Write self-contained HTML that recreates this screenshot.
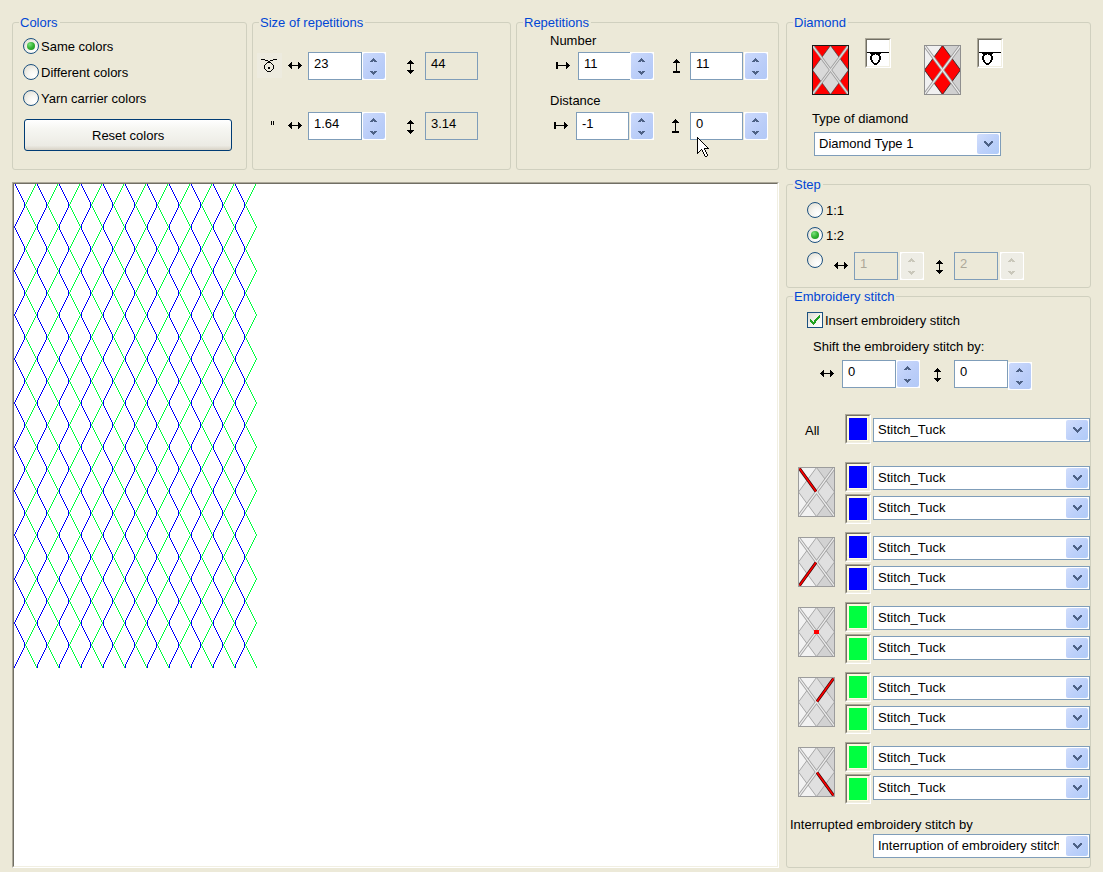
<!DOCTYPE html><html><head><meta charset="utf-8"><style>
*{box-sizing:content-box}
html,body{margin:0;padding:0;width:1103px;height:872px;overflow:hidden;background:#ECE9D8;font-family:"Liberation Sans", sans-serif;font-size:13px}
.t{position:absolute;white-space:nowrap;line-height:15px;font-size:13px}
.grp{position:absolute;border:1px solid #D0D0BF;border-radius:3px}
.gt{position:absolute;background:#ECE9D8;color:#0046D5;padding:0 2px 0 1px;line-height:15px;white-space:nowrap}
.rad{position:absolute;width:14px;height:14px;border:1px solid #1C5180;border-radius:50%;background:radial-gradient(circle at 70% 75%,#FFFFFF 0%,#F6F5F0 40%,#DCD9CC 100%)}
.rad .dot{position:absolute;left:3px;top:3px;width:8px;height:8px;border-radius:50%;background:radial-gradient(circle at 35% 30%,#7BE07B 0%,#32B232 50%,#1D8B1D 100%)}
.tb{position:absolute;border:1px solid #7F9DB9;background:#fff;overflow:hidden}
.tb.ro{background:#ECE9D8}
.tb span{position:absolute;left:5px;top:3px;line-height:15px;white-space:nowrap}
.sp{position:absolute;background:#fff}
.sp .spi{position:absolute;left:1px;top:1px;border-radius:2px;background:linear-gradient(135deg,#CCDAFC 0%,#BACDF8 60%,#B2C9F7 100%)}
.sp.dis{background:#fff}
.sp.dis .spi{background:#EEEDE5}
.cb{position:absolute;border:1px solid #7F9DB9;background:#fff;overflow:hidden}
.cbt{position:absolute;left:4px;top:3px;line-height:15px;white-space:nowrap;overflow:hidden}
.cbb{position:absolute;right:1px;top:1px;width:22px;height:20px;border-radius:2px;background:linear-gradient(135deg,#D2DEFC 0%,#BCD0FA 55%,#B0CBF8 100%)}
.snk{position:absolute;border-style:solid;border-width:1px;border-color:#ACA899 #FFFFFF #FFFFFF #ACA899}
.snk2{position:absolute;left:0;top:0;border-style:solid;border-width:1px;border-color:#716F64 #F1EFE2 #F1EFE2 #716F64}
.btn{position:absolute;border:1px solid #003C74;border-radius:3px;background:linear-gradient(180deg,#FFFFFF 0%,#F6F6F2 30%,#ECEBE4 85%,#D8D2C6 100%)}
</style></head><body>

<div class="grp" style="left:12px;top:22px;width:233px;height:146px"></div><div class="gt" style="left:19px;top:15px">Colors</div>
<div class="grp" style="left:252px;top:22px;width:257px;height:146px"></div><div class="gt" style="left:259px;top:15px">Size of repetitions</div>
<div class="grp" style="left:516px;top:22px;width:261px;height:146px"></div><div class="gt" style="left:523px;top:15px">Repetitions</div>
<div class="grp" style="left:786px;top:22px;width:303px;height:146px"></div><div class="gt" style="left:793px;top:15px">Diamond</div>
<div class="grp" style="left:786px;top:184px;width:303px;height:102px"></div><div class="gt" style="left:793px;top:177px">Step</div>
<div class="grp" style="left:786px;top:296px;width:303px;height:570px"></div><div class="gt" style="left:793px;top:289px">Embroidery stitch</div>
<div class="rad" style="left:23px;top:38px"><div class="dot"></div></div>
<div class="t" style="left:41px;top:39px;color:#000;">Same colors</div>
<div class="rad" style="left:23px;top:64px"></div>
<div class="t" style="left:41px;top:65px;color:#000;">Different colors</div>
<div class="rad" style="left:23px;top:90px"></div>
<div class="t" style="left:41px;top:91px;color:#000;">Yarn carrier colors</div>
<div class="btn" style="left:24px;top:119px;width:206px;height:30px"></div>
<div class="t" style="left:92px;top:128px;color:#000;">Reset colors</div>
<div style="position:absolute;left:257px;top:53px;width:25px;height:25px;background:#EDEBDF"></div>
<svg style="position:absolute;left:261px;top:59px" width="16" height="13" shape-rendering="crispEdges"><path fill="#000" d="M0 0h4v1h-4zM12 0h4v1h-4zM4 1h3v1h-3zM9 1h3v1h-3zM7 2h2v1h-2zM6 3h4v1h-4zM5 4h1v1h-1zM10 4h1v1h-1zM4 5h1v1h-1zM11 5h1v1h-1zM3 6h1v1h-1zM12 6h1v1h-1zM3 7h1v1h-1zM12 7h1v1h-1zM3 8h1v1h-1zM7 8h2v1h-2zM12 8h1v1h-1zM3 9h1v1h-1zM7 9h2v1h-2zM12 9h1v1h-1zM4 10h1v1h-1zM11 10h1v1h-1zM5 11h1v1h-1zM10 11h1v1h-1zM6 12h4v1h-4z"/></svg>
<svg style="position:absolute;left:288px;top:62px" width="14" height="7" shape-rendering="crispEdges"><path fill="#000" d="M3 0h1v1h-1zM10 0h1v1h-1zM2 1h2v1h-2zM10 1h2v1h-2zM1 2h3v1h-3zM10 2h3v1h-3zM0 3h14v1h-14zM1 4h3v1h-3zM10 4h3v1h-3zM2 5h2v1h-2zM10 5h2v1h-2zM3 6h1v1h-1zM10 6h1v1h-1z"/></svg>
<div class="tb" style="left:308px;top:52px;width:52px;height:26px;"><span style="color:#000">23</span></div>
<div class="sp" style="left:362px;top:52px;width:24px;height:28px"><div class="spi" style="width:22px;height:26px"><svg style="position:absolute;left:7px;top:5px" width="7" height="4" shape-rendering="crispEdges"><path fill="#4D6185" d="M3 0h1v1h-1zM2 1h3v1h-3zM1 2h5v1h-5zM0 3h3v1h-3zM4 3h3v1h-3z"/></svg><svg style="position:absolute;left:7px;top:18px" width="7" height="4" shape-rendering="crispEdges"><path fill="#4D6185" d="M0 0h3v1h-3zM4 0h3v1h-3zM1 1h5v1h-5zM2 2h3v1h-3zM3 3h1v1h-1z"/></svg></div></div>
<svg style="position:absolute;left:407px;top:60px" width="7" height="14" shape-rendering="crispEdges"><path fill="#000" d="M3 0h1v1h-1zM2 1h3v1h-3zM1 2h5v1h-5zM0 3h7v1h-7zM3 4h1v1h-1zM3 5h1v1h-1zM3 6h1v1h-1zM3 7h1v1h-1zM3 8h1v1h-1zM3 9h1v1h-1zM0 10h7v1h-7zM1 11h5v1h-5zM2 12h3v1h-3zM3 13h1v1h-1z"/></svg>
<div class="tb ro" style="left:425px;top:52px;width:51px;height:26px;"><span style="color:#000">44</span></div>
<svg style="position:absolute;left:271px;top:121px" width="3" height="4" shape-rendering="crispEdges"><path fill="#000" d="M0 0h1v1h-1zM2 0h1v1h-1zM0 1h1v1h-1zM2 1h1v1h-1zM0 2h1v1h-1zM2 2h1v1h-1zM0 3h1v1h-1zM2 3h1v1h-1z"/></svg>
<svg style="position:absolute;left:288px;top:122px" width="14" height="7" shape-rendering="crispEdges"><path fill="#000" d="M3 0h1v1h-1zM10 0h1v1h-1zM2 1h2v1h-2zM10 1h2v1h-2zM1 2h3v1h-3zM10 2h3v1h-3zM0 3h14v1h-14zM1 4h3v1h-3zM10 4h3v1h-3zM2 5h2v1h-2zM10 5h2v1h-2zM3 6h1v1h-1zM10 6h1v1h-1z"/></svg>
<div class="tb" style="left:308px;top:112px;width:52px;height:26px;"><span style="color:#000">1.64</span></div>
<div class="sp" style="left:362px;top:112px;width:24px;height:28px"><div class="spi" style="width:22px;height:26px"><svg style="position:absolute;left:7px;top:5px" width="7" height="4" shape-rendering="crispEdges"><path fill="#4D6185" d="M3 0h1v1h-1zM2 1h3v1h-3zM1 2h5v1h-5zM0 3h3v1h-3zM4 3h3v1h-3z"/></svg><svg style="position:absolute;left:7px;top:18px" width="7" height="4" shape-rendering="crispEdges"><path fill="#4D6185" d="M0 0h3v1h-3zM4 0h3v1h-3zM1 1h5v1h-5zM2 2h3v1h-3zM3 3h1v1h-1z"/></svg></div></div>
<svg style="position:absolute;left:407px;top:120px" width="7" height="14" shape-rendering="crispEdges"><path fill="#000" d="M3 0h1v1h-1zM2 1h3v1h-3zM1 2h5v1h-5zM0 3h7v1h-7zM3 4h1v1h-1zM3 5h1v1h-1zM3 6h1v1h-1zM3 7h1v1h-1zM3 8h1v1h-1zM3 9h1v1h-1zM0 10h7v1h-7zM1 11h5v1h-5zM2 12h3v1h-3zM3 13h1v1h-1z"/></svg>
<div class="tb ro" style="left:425px;top:112px;width:51px;height:26px;"><span style="color:#000">3.14</span></div>
<div class="t" style="left:550px;top:33px;color:#000;">Number</div>
<svg style="position:absolute;left:556px;top:62px" width="14" height="7" shape-rendering="crispEdges"><path fill="#000" d="M0 0h2v1h-2zM10 0h1v1h-1zM0 1h2v1h-2zM10 1h2v1h-2zM0 2h2v1h-2zM10 2h3v1h-3zM0 3h14v1h-14zM0 4h2v1h-2zM10 4h3v1h-3zM0 5h2v1h-2zM10 5h2v1h-2zM0 6h2v1h-2zM10 6h1v1h-1z"/></svg>
<div class="tb" style="left:578px;top:52px;width:50px;height:26px;border-right:none;width:51px;"><span style="color:#000">11</span></div>
<div class="sp" style="left:630px;top:52px;width:24px;height:28px"><div class="spi" style="width:22px;height:26px"><svg style="position:absolute;left:7px;top:5px" width="7" height="4" shape-rendering="crispEdges"><path fill="#4D6185" d="M3 0h1v1h-1zM2 1h3v1h-3zM1 2h5v1h-5zM0 3h3v1h-3zM4 3h3v1h-3z"/></svg><svg style="position:absolute;left:7px;top:18px" width="7" height="4" shape-rendering="crispEdges"><path fill="#4D6185" d="M0 0h3v1h-3zM4 0h3v1h-3zM1 1h5v1h-5zM2 2h3v1h-3zM3 3h1v1h-1z"/></svg></div></div>
<svg style="position:absolute;left:673px;top:59px" width="7" height="14" shape-rendering="crispEdges"><path fill="#000" d="M3 0h1v1h-1zM2 1h3v1h-3zM1 2h5v1h-5zM0 3h7v1h-7zM3 4h1v1h-1zM3 5h1v1h-1zM3 6h1v1h-1zM3 7h1v1h-1zM3 8h1v1h-1zM3 9h1v1h-1zM3 10h1v1h-1zM3 11h1v1h-1zM0 12h7v1h-7zM0 13h7v1h-7z"/></svg>
<div class="tb" style="left:690px;top:52px;width:51px;height:26px;"><span style="color:#000">11</span></div>
<div class="sp" style="left:744px;top:52px;width:24px;height:28px"><div class="spi" style="width:22px;height:26px"><svg style="position:absolute;left:7px;top:5px" width="7" height="4" shape-rendering="crispEdges"><path fill="#4D6185" d="M3 0h1v1h-1zM2 1h3v1h-3zM1 2h5v1h-5zM0 3h3v1h-3zM4 3h3v1h-3z"/></svg><svg style="position:absolute;left:7px;top:18px" width="7" height="4" shape-rendering="crispEdges"><path fill="#4D6185" d="M0 0h3v1h-3zM4 0h3v1h-3zM1 1h5v1h-5zM2 2h3v1h-3zM3 3h1v1h-1z"/></svg></div></div>
<div class="t" style="left:550px;top:93px;color:#000;">Distance</div>
<svg style="position:absolute;left:554px;top:122px" width="14" height="7" shape-rendering="crispEdges"><path fill="#000" d="M0 0h2v1h-2zM10 0h1v1h-1zM0 1h2v1h-2zM10 1h2v1h-2zM0 2h2v1h-2zM10 2h3v1h-3zM0 3h14v1h-14zM0 4h2v1h-2zM10 4h3v1h-3zM0 5h2v1h-2zM10 5h2v1h-2zM0 6h2v1h-2zM10 6h1v1h-1z"/></svg>
<div class="tb" style="left:576px;top:112px;width:51px;height:26px;"><span style="color:#000">-1</span></div>
<div class="sp" style="left:630px;top:112px;width:24px;height:28px"><div class="spi" style="width:22px;height:26px"><svg style="position:absolute;left:7px;top:5px" width="7" height="4" shape-rendering="crispEdges"><path fill="#4D6185" d="M3 0h1v1h-1zM2 1h3v1h-3zM1 2h5v1h-5zM0 3h3v1h-3zM4 3h3v1h-3z"/></svg><svg style="position:absolute;left:7px;top:18px" width="7" height="4" shape-rendering="crispEdges"><path fill="#4D6185" d="M0 0h3v1h-3zM4 0h3v1h-3zM1 1h5v1h-5zM2 2h3v1h-3zM3 3h1v1h-1z"/></svg></div></div>
<svg style="position:absolute;left:672px;top:119px" width="7" height="14" shape-rendering="crispEdges"><path fill="#000" d="M3 0h1v1h-1zM2 1h3v1h-3zM1 2h5v1h-5zM0 3h7v1h-7zM3 4h1v1h-1zM3 5h1v1h-1zM3 6h1v1h-1zM3 7h1v1h-1zM3 8h1v1h-1zM3 9h1v1h-1zM3 10h1v1h-1zM3 11h1v1h-1zM0 12h7v1h-7zM0 13h7v1h-7z"/></svg>
<div class="tb" style="left:690px;top:112px;width:51px;height:26px;"><span style="color:#000">0</span></div>
<div class="sp" style="left:744px;top:112px;width:24px;height:28px"><div class="spi" style="width:22px;height:26px"><svg style="position:absolute;left:7px;top:5px" width="7" height="4" shape-rendering="crispEdges"><path fill="#4D6185" d="M3 0h1v1h-1zM2 1h3v1h-3zM1 2h5v1h-5zM0 3h3v1h-3zM4 3h3v1h-3z"/></svg><svg style="position:absolute;left:7px;top:18px" width="7" height="4" shape-rendering="crispEdges"><path fill="#4D6185" d="M0 0h3v1h-3zM4 0h3v1h-3zM1 1h5v1h-5zM2 2h3v1h-3zM3 3h1v1h-1z"/></svg></div></div>
<div style="position:absolute;left:12px;top:182px;width:765px;height:684px;border-style:solid;border-width:1px;border-color:#ACA899 #FFFFFF #FFFFFF #ACA899;background:#fff"><div style="position:absolute;left:0;top:0;width:763px;height:682px;border-style:solid;border-width:1px;border-color:#716F64 #F1EFE2 #F1EFE2 #716F64"></div></div>
<svg style="position:absolute;left:14px;top:184px" width="250" height="490" shape-rendering="crispEdges"><path fill="#0000FF" d="M1 0h1v2h-1zM2 2h1v2h-1zM3 4h1v2h-1zM4 6h1v2h-1zM5 8h1v2h-1zM6 10h1v2h-1zM7 12h1v2h-1zM8 14h1v2h-1zM9 16h1v2h-1zM10 18h1v6h-1zM9 24h1v2h-1zM8 26h1v2h-1zM7 28h1v2h-1zM6 30h1v2h-1zM5 32h1v2h-1zM4 34h1v2h-1zM3 36h1v2h-1zM2 38h1v2h-1zM1 40h1v2h-1zM0 42h1v2h-1zM23 0h1v2h-1zM24 2h1v2h-1zM25 4h1v2h-1zM26 6h1v2h-1zM27 8h1v2h-1zM28 10h1v2h-1zM29 12h1v2h-1zM30 14h1v2h-1zM31 16h1v2h-1zM32 18h1v6h-1zM31 24h1v2h-1zM30 26h1v2h-1zM29 28h1v2h-1zM28 30h1v2h-1zM27 32h1v2h-1zM26 34h1v2h-1zM25 36h1v2h-1zM24 38h1v2h-1zM23 40h1v2h-1zM22 42h1v2h-1zM23 42h1v2h-1zM45 0h1v2h-1zM46 2h1v2h-1zM47 4h1v2h-1zM48 6h1v2h-1zM49 8h1v2h-1zM50 10h1v2h-1zM51 12h1v2h-1zM52 14h1v2h-1zM53 16h1v2h-1zM54 18h1v6h-1zM53 24h1v2h-1zM52 26h1v2h-1zM51 28h1v2h-1zM50 30h1v2h-1zM49 32h1v2h-1zM48 34h1v2h-1zM47 36h1v2h-1zM46 38h1v2h-1zM45 40h1v2h-1zM44 42h1v2h-1zM45 42h1v2h-1zM67 0h1v2h-1zM68 2h1v2h-1zM69 4h1v2h-1zM70 6h1v2h-1zM71 8h1v2h-1zM72 10h1v2h-1zM73 12h1v2h-1zM74 14h1v2h-1zM75 16h1v2h-1zM76 18h1v6h-1zM75 24h1v2h-1zM74 26h1v2h-1zM73 28h1v2h-1zM72 30h1v2h-1zM71 32h1v2h-1zM70 34h1v2h-1zM69 36h1v2h-1zM68 38h1v2h-1zM67 40h1v2h-1zM66 42h1v2h-1zM67 42h1v2h-1zM89 0h1v2h-1zM90 2h1v2h-1zM91 4h1v2h-1zM92 6h1v2h-1zM93 8h1v2h-1zM94 10h1v2h-1zM95 12h1v2h-1zM96 14h1v2h-1zM97 16h1v2h-1zM98 18h1v6h-1zM97 24h1v2h-1zM96 26h1v2h-1zM95 28h1v2h-1zM94 30h1v2h-1zM93 32h1v2h-1zM92 34h1v2h-1zM91 36h1v2h-1zM90 38h1v2h-1zM89 40h1v2h-1zM88 42h1v2h-1zM89 42h1v2h-1zM111 0h1v2h-1zM112 2h1v2h-1zM113 4h1v2h-1zM114 6h1v2h-1zM115 8h1v2h-1zM116 10h1v2h-1zM117 12h1v2h-1zM118 14h1v2h-1zM119 16h1v2h-1zM120 18h1v6h-1zM119 24h1v2h-1zM118 26h1v2h-1zM117 28h1v2h-1zM116 30h1v2h-1zM115 32h1v2h-1zM114 34h1v2h-1zM113 36h1v2h-1zM112 38h1v2h-1zM111 40h1v2h-1zM110 42h1v2h-1zM111 42h1v2h-1zM133 0h1v2h-1zM134 2h1v2h-1zM135 4h1v2h-1zM136 6h1v2h-1zM137 8h1v2h-1zM138 10h1v2h-1zM139 12h1v2h-1zM140 14h1v2h-1zM141 16h1v2h-1zM142 18h1v6h-1zM141 24h1v2h-1zM140 26h1v2h-1zM139 28h1v2h-1zM138 30h1v2h-1zM137 32h1v2h-1zM136 34h1v2h-1zM135 36h1v2h-1zM134 38h1v2h-1zM133 40h1v2h-1zM132 42h1v2h-1zM133 42h1v2h-1zM155 0h1v2h-1zM156 2h1v2h-1zM157 4h1v2h-1zM158 6h1v2h-1zM159 8h1v2h-1zM160 10h1v2h-1zM161 12h1v2h-1zM162 14h1v2h-1zM163 16h1v2h-1zM164 18h1v6h-1zM163 24h1v2h-1zM162 26h1v2h-1zM161 28h1v2h-1zM160 30h1v2h-1zM159 32h1v2h-1zM158 34h1v2h-1zM157 36h1v2h-1zM156 38h1v2h-1zM155 40h1v2h-1zM154 42h1v2h-1zM155 42h1v2h-1zM177 0h1v2h-1zM178 2h1v2h-1zM179 4h1v2h-1zM180 6h1v2h-1zM181 8h1v2h-1zM182 10h1v2h-1zM183 12h1v2h-1zM184 14h1v2h-1zM185 16h1v2h-1zM186 18h1v6h-1zM185 24h1v2h-1zM184 26h1v2h-1zM183 28h1v2h-1zM182 30h1v2h-1zM181 32h1v2h-1zM180 34h1v2h-1zM179 36h1v2h-1zM178 38h1v2h-1zM177 40h1v2h-1zM176 42h1v2h-1zM177 42h1v2h-1zM199 0h1v2h-1zM200 2h1v2h-1zM201 4h1v2h-1zM202 6h1v2h-1zM203 8h1v2h-1zM204 10h1v2h-1zM205 12h1v2h-1zM206 14h1v2h-1zM207 16h1v2h-1zM208 18h1v6h-1zM207 24h1v2h-1zM206 26h1v2h-1zM205 28h1v2h-1zM204 30h1v2h-1zM203 32h1v2h-1zM202 34h1v2h-1zM201 36h1v2h-1zM200 38h1v2h-1zM199 40h1v2h-1zM198 42h1v2h-1zM199 42h1v2h-1zM221 0h1v2h-1zM222 2h1v2h-1zM223 4h1v2h-1zM224 6h1v2h-1zM225 8h1v2h-1zM226 10h1v2h-1zM227 12h1v2h-1zM228 14h1v2h-1zM229 16h1v2h-1zM230 18h1v6h-1zM229 24h1v2h-1zM228 26h1v2h-1zM227 28h1v2h-1zM226 30h1v2h-1zM225 32h1v2h-1zM224 34h1v2h-1zM223 36h1v2h-1zM222 38h1v2h-1zM221 40h1v2h-1zM220 42h1v2h-1zM221 42h1v2h-1zM1 44h1v2h-1zM2 46h1v2h-1zM3 48h1v2h-1zM4 50h1v2h-1zM5 52h1v2h-1zM6 54h1v2h-1zM7 56h1v2h-1zM8 58h1v2h-1zM9 60h1v2h-1zM10 62h1v6h-1zM9 68h1v2h-1zM8 70h1v2h-1zM7 72h1v2h-1zM6 74h1v2h-1zM5 76h1v2h-1zM4 78h1v2h-1zM3 80h1v2h-1zM2 82h1v2h-1zM1 84h1v2h-1zM0 86h1v2h-1zM23 44h1v2h-1zM24 46h1v2h-1zM25 48h1v2h-1zM26 50h1v2h-1zM27 52h1v2h-1zM28 54h1v2h-1zM29 56h1v2h-1zM30 58h1v2h-1zM31 60h1v2h-1zM32 62h1v6h-1zM31 68h1v2h-1zM30 70h1v2h-1zM29 72h1v2h-1zM28 74h1v2h-1zM27 76h1v2h-1zM26 78h1v2h-1zM25 80h1v2h-1zM24 82h1v2h-1zM23 84h1v2h-1zM22 86h1v2h-1zM23 86h1v2h-1zM45 44h1v2h-1zM46 46h1v2h-1zM47 48h1v2h-1zM48 50h1v2h-1zM49 52h1v2h-1zM50 54h1v2h-1zM51 56h1v2h-1zM52 58h1v2h-1zM53 60h1v2h-1zM54 62h1v6h-1zM53 68h1v2h-1zM52 70h1v2h-1zM51 72h1v2h-1zM50 74h1v2h-1zM49 76h1v2h-1zM48 78h1v2h-1zM47 80h1v2h-1zM46 82h1v2h-1zM45 84h1v2h-1zM44 86h1v2h-1zM45 86h1v2h-1zM67 44h1v2h-1zM68 46h1v2h-1zM69 48h1v2h-1zM70 50h1v2h-1zM71 52h1v2h-1zM72 54h1v2h-1zM73 56h1v2h-1zM74 58h1v2h-1zM75 60h1v2h-1zM76 62h1v6h-1zM75 68h1v2h-1zM74 70h1v2h-1zM73 72h1v2h-1zM72 74h1v2h-1zM71 76h1v2h-1zM70 78h1v2h-1zM69 80h1v2h-1zM68 82h1v2h-1zM67 84h1v2h-1zM66 86h1v2h-1zM67 86h1v2h-1zM89 44h1v2h-1zM90 46h1v2h-1zM91 48h1v2h-1zM92 50h1v2h-1zM93 52h1v2h-1zM94 54h1v2h-1zM95 56h1v2h-1zM96 58h1v2h-1zM97 60h1v2h-1zM98 62h1v6h-1zM97 68h1v2h-1zM96 70h1v2h-1zM95 72h1v2h-1zM94 74h1v2h-1zM93 76h1v2h-1zM92 78h1v2h-1zM91 80h1v2h-1zM90 82h1v2h-1zM89 84h1v2h-1zM88 86h1v2h-1zM89 86h1v2h-1zM111 44h1v2h-1zM112 46h1v2h-1zM113 48h1v2h-1zM114 50h1v2h-1zM115 52h1v2h-1zM116 54h1v2h-1zM117 56h1v2h-1zM118 58h1v2h-1zM119 60h1v2h-1zM120 62h1v6h-1zM119 68h1v2h-1zM118 70h1v2h-1zM117 72h1v2h-1zM116 74h1v2h-1zM115 76h1v2h-1zM114 78h1v2h-1zM113 80h1v2h-1zM112 82h1v2h-1zM111 84h1v2h-1zM110 86h1v2h-1zM111 86h1v2h-1zM133 44h1v2h-1zM134 46h1v2h-1zM135 48h1v2h-1zM136 50h1v2h-1zM137 52h1v2h-1zM138 54h1v2h-1zM139 56h1v2h-1zM140 58h1v2h-1zM141 60h1v2h-1zM142 62h1v6h-1zM141 68h1v2h-1zM140 70h1v2h-1zM139 72h1v2h-1zM138 74h1v2h-1zM137 76h1v2h-1zM136 78h1v2h-1zM135 80h1v2h-1zM134 82h1v2h-1zM133 84h1v2h-1zM132 86h1v2h-1zM133 86h1v2h-1zM155 44h1v2h-1zM156 46h1v2h-1zM157 48h1v2h-1zM158 50h1v2h-1zM159 52h1v2h-1zM160 54h1v2h-1zM161 56h1v2h-1zM162 58h1v2h-1zM163 60h1v2h-1zM164 62h1v6h-1zM163 68h1v2h-1zM162 70h1v2h-1zM161 72h1v2h-1zM160 74h1v2h-1zM159 76h1v2h-1zM158 78h1v2h-1zM157 80h1v2h-1zM156 82h1v2h-1zM155 84h1v2h-1zM154 86h1v2h-1zM155 86h1v2h-1zM177 44h1v2h-1zM178 46h1v2h-1zM179 48h1v2h-1zM180 50h1v2h-1zM181 52h1v2h-1zM182 54h1v2h-1zM183 56h1v2h-1zM184 58h1v2h-1zM185 60h1v2h-1zM186 62h1v6h-1zM185 68h1v2h-1zM184 70h1v2h-1zM183 72h1v2h-1zM182 74h1v2h-1zM181 76h1v2h-1zM180 78h1v2h-1zM179 80h1v2h-1zM178 82h1v2h-1zM177 84h1v2h-1zM176 86h1v2h-1zM177 86h1v2h-1zM199 44h1v2h-1zM200 46h1v2h-1zM201 48h1v2h-1zM202 50h1v2h-1zM203 52h1v2h-1zM204 54h1v2h-1zM205 56h1v2h-1zM206 58h1v2h-1zM207 60h1v2h-1zM208 62h1v6h-1zM207 68h1v2h-1zM206 70h1v2h-1zM205 72h1v2h-1zM204 74h1v2h-1zM203 76h1v2h-1zM202 78h1v2h-1zM201 80h1v2h-1zM200 82h1v2h-1zM199 84h1v2h-1zM198 86h1v2h-1zM199 86h1v2h-1zM221 44h1v2h-1zM222 46h1v2h-1zM223 48h1v2h-1zM224 50h1v2h-1zM225 52h1v2h-1zM226 54h1v2h-1zM227 56h1v2h-1zM228 58h1v2h-1zM229 60h1v2h-1zM230 62h1v6h-1zM229 68h1v2h-1zM228 70h1v2h-1zM227 72h1v2h-1zM226 74h1v2h-1zM225 76h1v2h-1zM224 78h1v2h-1zM223 80h1v2h-1zM222 82h1v2h-1zM221 84h1v2h-1zM220 86h1v2h-1zM221 86h1v2h-1zM1 88h1v2h-1zM2 90h1v2h-1zM3 92h1v2h-1zM4 94h1v2h-1zM5 96h1v2h-1zM6 98h1v2h-1zM7 100h1v2h-1zM8 102h1v2h-1zM9 104h1v2h-1zM10 106h1v6h-1zM9 112h1v2h-1zM8 114h1v2h-1zM7 116h1v2h-1zM6 118h1v2h-1zM5 120h1v2h-1zM4 122h1v2h-1zM3 124h1v2h-1zM2 126h1v2h-1zM1 128h1v2h-1zM0 130h1v2h-1zM23 88h1v2h-1zM24 90h1v2h-1zM25 92h1v2h-1zM26 94h1v2h-1zM27 96h1v2h-1zM28 98h1v2h-1zM29 100h1v2h-1zM30 102h1v2h-1zM31 104h1v2h-1zM32 106h1v6h-1zM31 112h1v2h-1zM30 114h1v2h-1zM29 116h1v2h-1zM28 118h1v2h-1zM27 120h1v2h-1zM26 122h1v2h-1zM25 124h1v2h-1zM24 126h1v2h-1zM23 128h1v2h-1zM22 130h1v2h-1zM23 130h1v2h-1zM45 88h1v2h-1zM46 90h1v2h-1zM47 92h1v2h-1zM48 94h1v2h-1zM49 96h1v2h-1zM50 98h1v2h-1zM51 100h1v2h-1zM52 102h1v2h-1zM53 104h1v2h-1zM54 106h1v6h-1zM53 112h1v2h-1zM52 114h1v2h-1zM51 116h1v2h-1zM50 118h1v2h-1zM49 120h1v2h-1zM48 122h1v2h-1zM47 124h1v2h-1zM46 126h1v2h-1zM45 128h1v2h-1zM44 130h1v2h-1zM45 130h1v2h-1zM67 88h1v2h-1zM68 90h1v2h-1zM69 92h1v2h-1zM70 94h1v2h-1zM71 96h1v2h-1zM72 98h1v2h-1zM73 100h1v2h-1zM74 102h1v2h-1zM75 104h1v2h-1zM76 106h1v6h-1zM75 112h1v2h-1zM74 114h1v2h-1zM73 116h1v2h-1zM72 118h1v2h-1zM71 120h1v2h-1zM70 122h1v2h-1zM69 124h1v2h-1zM68 126h1v2h-1zM67 128h1v2h-1zM66 130h1v2h-1zM67 130h1v2h-1zM89 88h1v2h-1zM90 90h1v2h-1zM91 92h1v2h-1zM92 94h1v2h-1zM93 96h1v2h-1zM94 98h1v2h-1zM95 100h1v2h-1zM96 102h1v2h-1zM97 104h1v2h-1zM98 106h1v6h-1zM97 112h1v2h-1zM96 114h1v2h-1zM95 116h1v2h-1zM94 118h1v2h-1zM93 120h1v2h-1zM92 122h1v2h-1zM91 124h1v2h-1zM90 126h1v2h-1zM89 128h1v2h-1zM88 130h1v2h-1zM89 130h1v2h-1zM111 88h1v2h-1zM112 90h1v2h-1zM113 92h1v2h-1zM114 94h1v2h-1zM115 96h1v2h-1zM116 98h1v2h-1zM117 100h1v2h-1zM118 102h1v2h-1zM119 104h1v2h-1zM120 106h1v6h-1zM119 112h1v2h-1zM118 114h1v2h-1zM117 116h1v2h-1zM116 118h1v2h-1zM115 120h1v2h-1zM114 122h1v2h-1zM113 124h1v2h-1zM112 126h1v2h-1zM111 128h1v2h-1zM110 130h1v2h-1zM111 130h1v2h-1zM133 88h1v2h-1zM134 90h1v2h-1zM135 92h1v2h-1zM136 94h1v2h-1zM137 96h1v2h-1zM138 98h1v2h-1zM139 100h1v2h-1zM140 102h1v2h-1zM141 104h1v2h-1zM142 106h1v6h-1zM141 112h1v2h-1zM140 114h1v2h-1zM139 116h1v2h-1zM138 118h1v2h-1zM137 120h1v2h-1zM136 122h1v2h-1zM135 124h1v2h-1zM134 126h1v2h-1zM133 128h1v2h-1zM132 130h1v2h-1zM133 130h1v2h-1zM155 88h1v2h-1zM156 90h1v2h-1zM157 92h1v2h-1zM158 94h1v2h-1zM159 96h1v2h-1zM160 98h1v2h-1zM161 100h1v2h-1zM162 102h1v2h-1zM163 104h1v2h-1zM164 106h1v6h-1zM163 112h1v2h-1zM162 114h1v2h-1zM161 116h1v2h-1zM160 118h1v2h-1zM159 120h1v2h-1zM158 122h1v2h-1zM157 124h1v2h-1zM156 126h1v2h-1zM155 128h1v2h-1zM154 130h1v2h-1zM155 130h1v2h-1zM177 88h1v2h-1zM178 90h1v2h-1zM179 92h1v2h-1zM180 94h1v2h-1zM181 96h1v2h-1zM182 98h1v2h-1zM183 100h1v2h-1zM184 102h1v2h-1zM185 104h1v2h-1zM186 106h1v6h-1zM185 112h1v2h-1zM184 114h1v2h-1zM183 116h1v2h-1zM182 118h1v2h-1zM181 120h1v2h-1zM180 122h1v2h-1zM179 124h1v2h-1zM178 126h1v2h-1zM177 128h1v2h-1zM176 130h1v2h-1zM177 130h1v2h-1zM199 88h1v2h-1zM200 90h1v2h-1zM201 92h1v2h-1zM202 94h1v2h-1zM203 96h1v2h-1zM204 98h1v2h-1zM205 100h1v2h-1zM206 102h1v2h-1zM207 104h1v2h-1zM208 106h1v6h-1zM207 112h1v2h-1zM206 114h1v2h-1zM205 116h1v2h-1zM204 118h1v2h-1zM203 120h1v2h-1zM202 122h1v2h-1zM201 124h1v2h-1zM200 126h1v2h-1zM199 128h1v2h-1zM198 130h1v2h-1zM199 130h1v2h-1zM221 88h1v2h-1zM222 90h1v2h-1zM223 92h1v2h-1zM224 94h1v2h-1zM225 96h1v2h-1zM226 98h1v2h-1zM227 100h1v2h-1zM228 102h1v2h-1zM229 104h1v2h-1zM230 106h1v6h-1zM229 112h1v2h-1zM228 114h1v2h-1zM227 116h1v2h-1zM226 118h1v2h-1zM225 120h1v2h-1zM224 122h1v2h-1zM223 124h1v2h-1zM222 126h1v2h-1zM221 128h1v2h-1zM220 130h1v2h-1zM221 130h1v2h-1zM1 132h1v2h-1zM2 134h1v2h-1zM3 136h1v2h-1zM4 138h1v2h-1zM5 140h1v2h-1zM6 142h1v2h-1zM7 144h1v2h-1zM8 146h1v2h-1zM9 148h1v2h-1zM10 150h1v6h-1zM9 156h1v2h-1zM8 158h1v2h-1zM7 160h1v2h-1zM6 162h1v2h-1zM5 164h1v2h-1zM4 166h1v2h-1zM3 168h1v2h-1zM2 170h1v2h-1zM1 172h1v2h-1zM0 174h1v2h-1zM23 132h1v2h-1zM24 134h1v2h-1zM25 136h1v2h-1zM26 138h1v2h-1zM27 140h1v2h-1zM28 142h1v2h-1zM29 144h1v2h-1zM30 146h1v2h-1zM31 148h1v2h-1zM32 150h1v6h-1zM31 156h1v2h-1zM30 158h1v2h-1zM29 160h1v2h-1zM28 162h1v2h-1zM27 164h1v2h-1zM26 166h1v2h-1zM25 168h1v2h-1zM24 170h1v2h-1zM23 172h1v2h-1zM22 174h1v2h-1zM23 174h1v2h-1zM45 132h1v2h-1zM46 134h1v2h-1zM47 136h1v2h-1zM48 138h1v2h-1zM49 140h1v2h-1zM50 142h1v2h-1zM51 144h1v2h-1zM52 146h1v2h-1zM53 148h1v2h-1zM54 150h1v6h-1zM53 156h1v2h-1zM52 158h1v2h-1zM51 160h1v2h-1zM50 162h1v2h-1zM49 164h1v2h-1zM48 166h1v2h-1zM47 168h1v2h-1zM46 170h1v2h-1zM45 172h1v2h-1zM44 174h1v2h-1zM45 174h1v2h-1zM67 132h1v2h-1zM68 134h1v2h-1zM69 136h1v2h-1zM70 138h1v2h-1zM71 140h1v2h-1zM72 142h1v2h-1zM73 144h1v2h-1zM74 146h1v2h-1zM75 148h1v2h-1zM76 150h1v6h-1zM75 156h1v2h-1zM74 158h1v2h-1zM73 160h1v2h-1zM72 162h1v2h-1zM71 164h1v2h-1zM70 166h1v2h-1zM69 168h1v2h-1zM68 170h1v2h-1zM67 172h1v2h-1zM66 174h1v2h-1zM67 174h1v2h-1zM89 132h1v2h-1zM90 134h1v2h-1zM91 136h1v2h-1zM92 138h1v2h-1zM93 140h1v2h-1zM94 142h1v2h-1zM95 144h1v2h-1zM96 146h1v2h-1zM97 148h1v2h-1zM98 150h1v6h-1zM97 156h1v2h-1zM96 158h1v2h-1zM95 160h1v2h-1zM94 162h1v2h-1zM93 164h1v2h-1zM92 166h1v2h-1zM91 168h1v2h-1zM90 170h1v2h-1zM89 172h1v2h-1zM88 174h1v2h-1zM89 174h1v2h-1zM111 132h1v2h-1zM112 134h1v2h-1zM113 136h1v2h-1zM114 138h1v2h-1zM115 140h1v2h-1zM116 142h1v2h-1zM117 144h1v2h-1zM118 146h1v2h-1zM119 148h1v2h-1zM120 150h1v6h-1zM119 156h1v2h-1zM118 158h1v2h-1zM117 160h1v2h-1zM116 162h1v2h-1zM115 164h1v2h-1zM114 166h1v2h-1zM113 168h1v2h-1zM112 170h1v2h-1zM111 172h1v2h-1zM110 174h1v2h-1zM111 174h1v2h-1zM133 132h1v2h-1zM134 134h1v2h-1zM135 136h1v2h-1zM136 138h1v2h-1zM137 140h1v2h-1zM138 142h1v2h-1zM139 144h1v2h-1zM140 146h1v2h-1zM141 148h1v2h-1zM142 150h1v6h-1zM141 156h1v2h-1zM140 158h1v2h-1zM139 160h1v2h-1zM138 162h1v2h-1zM137 164h1v2h-1zM136 166h1v2h-1zM135 168h1v2h-1zM134 170h1v2h-1zM133 172h1v2h-1zM132 174h1v2h-1zM133 174h1v2h-1zM155 132h1v2h-1zM156 134h1v2h-1zM157 136h1v2h-1zM158 138h1v2h-1zM159 140h1v2h-1zM160 142h1v2h-1zM161 144h1v2h-1zM162 146h1v2h-1zM163 148h1v2h-1zM164 150h1v6h-1zM163 156h1v2h-1zM162 158h1v2h-1zM161 160h1v2h-1zM160 162h1v2h-1zM159 164h1v2h-1zM158 166h1v2h-1zM157 168h1v2h-1zM156 170h1v2h-1zM155 172h1v2h-1zM154 174h1v2h-1zM155 174h1v2h-1zM177 132h1v2h-1zM178 134h1v2h-1zM179 136h1v2h-1zM180 138h1v2h-1zM181 140h1v2h-1zM182 142h1v2h-1zM183 144h1v2h-1zM184 146h1v2h-1zM185 148h1v2h-1zM186 150h1v6h-1zM185 156h1v2h-1zM184 158h1v2h-1zM183 160h1v2h-1zM182 162h1v2h-1zM181 164h1v2h-1zM180 166h1v2h-1zM179 168h1v2h-1zM178 170h1v2h-1zM177 172h1v2h-1zM176 174h1v2h-1zM177 174h1v2h-1zM199 132h1v2h-1zM200 134h1v2h-1zM201 136h1v2h-1zM202 138h1v2h-1zM203 140h1v2h-1zM204 142h1v2h-1zM205 144h1v2h-1zM206 146h1v2h-1zM207 148h1v2h-1zM208 150h1v6h-1zM207 156h1v2h-1zM206 158h1v2h-1zM205 160h1v2h-1zM204 162h1v2h-1zM203 164h1v2h-1zM202 166h1v2h-1zM201 168h1v2h-1zM200 170h1v2h-1zM199 172h1v2h-1zM198 174h1v2h-1zM199 174h1v2h-1zM221 132h1v2h-1zM222 134h1v2h-1zM223 136h1v2h-1zM224 138h1v2h-1zM225 140h1v2h-1zM226 142h1v2h-1zM227 144h1v2h-1zM228 146h1v2h-1zM229 148h1v2h-1zM230 150h1v6h-1zM229 156h1v2h-1zM228 158h1v2h-1zM227 160h1v2h-1zM226 162h1v2h-1zM225 164h1v2h-1zM224 166h1v2h-1zM223 168h1v2h-1zM222 170h1v2h-1zM221 172h1v2h-1zM220 174h1v2h-1zM221 174h1v2h-1zM1 176h1v2h-1zM2 178h1v2h-1zM3 180h1v2h-1zM4 182h1v2h-1zM5 184h1v2h-1zM6 186h1v2h-1zM7 188h1v2h-1zM8 190h1v2h-1zM9 192h1v2h-1zM10 194h1v6h-1zM9 200h1v2h-1zM8 202h1v2h-1zM7 204h1v2h-1zM6 206h1v2h-1zM5 208h1v2h-1zM4 210h1v2h-1zM3 212h1v2h-1zM2 214h1v2h-1zM1 216h1v2h-1zM0 218h1v2h-1zM23 176h1v2h-1zM24 178h1v2h-1zM25 180h1v2h-1zM26 182h1v2h-1zM27 184h1v2h-1zM28 186h1v2h-1zM29 188h1v2h-1zM30 190h1v2h-1zM31 192h1v2h-1zM32 194h1v6h-1zM31 200h1v2h-1zM30 202h1v2h-1zM29 204h1v2h-1zM28 206h1v2h-1zM27 208h1v2h-1zM26 210h1v2h-1zM25 212h1v2h-1zM24 214h1v2h-1zM23 216h1v2h-1zM22 218h1v2h-1zM23 218h1v2h-1zM45 176h1v2h-1zM46 178h1v2h-1zM47 180h1v2h-1zM48 182h1v2h-1zM49 184h1v2h-1zM50 186h1v2h-1zM51 188h1v2h-1zM52 190h1v2h-1zM53 192h1v2h-1zM54 194h1v6h-1zM53 200h1v2h-1zM52 202h1v2h-1zM51 204h1v2h-1zM50 206h1v2h-1zM49 208h1v2h-1zM48 210h1v2h-1zM47 212h1v2h-1zM46 214h1v2h-1zM45 216h1v2h-1zM44 218h1v2h-1zM45 218h1v2h-1zM67 176h1v2h-1zM68 178h1v2h-1zM69 180h1v2h-1zM70 182h1v2h-1zM71 184h1v2h-1zM72 186h1v2h-1zM73 188h1v2h-1zM74 190h1v2h-1zM75 192h1v2h-1zM76 194h1v6h-1zM75 200h1v2h-1zM74 202h1v2h-1zM73 204h1v2h-1zM72 206h1v2h-1zM71 208h1v2h-1zM70 210h1v2h-1zM69 212h1v2h-1zM68 214h1v2h-1zM67 216h1v2h-1zM66 218h1v2h-1zM67 218h1v2h-1zM89 176h1v2h-1zM90 178h1v2h-1zM91 180h1v2h-1zM92 182h1v2h-1zM93 184h1v2h-1zM94 186h1v2h-1zM95 188h1v2h-1zM96 190h1v2h-1zM97 192h1v2h-1zM98 194h1v6h-1zM97 200h1v2h-1zM96 202h1v2h-1zM95 204h1v2h-1zM94 206h1v2h-1zM93 208h1v2h-1zM92 210h1v2h-1zM91 212h1v2h-1zM90 214h1v2h-1zM89 216h1v2h-1zM88 218h1v2h-1zM89 218h1v2h-1zM111 176h1v2h-1zM112 178h1v2h-1zM113 180h1v2h-1zM114 182h1v2h-1zM115 184h1v2h-1zM116 186h1v2h-1zM117 188h1v2h-1zM118 190h1v2h-1zM119 192h1v2h-1zM120 194h1v6h-1zM119 200h1v2h-1zM118 202h1v2h-1zM117 204h1v2h-1zM116 206h1v2h-1zM115 208h1v2h-1zM114 210h1v2h-1zM113 212h1v2h-1zM112 214h1v2h-1zM111 216h1v2h-1zM110 218h1v2h-1zM111 218h1v2h-1zM133 176h1v2h-1zM134 178h1v2h-1zM135 180h1v2h-1zM136 182h1v2h-1zM137 184h1v2h-1zM138 186h1v2h-1zM139 188h1v2h-1zM140 190h1v2h-1zM141 192h1v2h-1zM142 194h1v6h-1zM141 200h1v2h-1zM140 202h1v2h-1zM139 204h1v2h-1zM138 206h1v2h-1zM137 208h1v2h-1zM136 210h1v2h-1zM135 212h1v2h-1zM134 214h1v2h-1zM133 216h1v2h-1zM132 218h1v2h-1zM133 218h1v2h-1zM155 176h1v2h-1zM156 178h1v2h-1zM157 180h1v2h-1zM158 182h1v2h-1zM159 184h1v2h-1zM160 186h1v2h-1zM161 188h1v2h-1zM162 190h1v2h-1zM163 192h1v2h-1zM164 194h1v6h-1zM163 200h1v2h-1zM162 202h1v2h-1zM161 204h1v2h-1zM160 206h1v2h-1zM159 208h1v2h-1zM158 210h1v2h-1zM157 212h1v2h-1zM156 214h1v2h-1zM155 216h1v2h-1zM154 218h1v2h-1zM155 218h1v2h-1zM177 176h1v2h-1zM178 178h1v2h-1zM179 180h1v2h-1zM180 182h1v2h-1zM181 184h1v2h-1zM182 186h1v2h-1zM183 188h1v2h-1zM184 190h1v2h-1zM185 192h1v2h-1zM186 194h1v6h-1zM185 200h1v2h-1zM184 202h1v2h-1zM183 204h1v2h-1zM182 206h1v2h-1zM181 208h1v2h-1zM180 210h1v2h-1zM179 212h1v2h-1zM178 214h1v2h-1zM177 216h1v2h-1zM176 218h1v2h-1zM177 218h1v2h-1zM199 176h1v2h-1zM200 178h1v2h-1zM201 180h1v2h-1zM202 182h1v2h-1zM203 184h1v2h-1zM204 186h1v2h-1zM205 188h1v2h-1zM206 190h1v2h-1zM207 192h1v2h-1zM208 194h1v6h-1zM207 200h1v2h-1zM206 202h1v2h-1zM205 204h1v2h-1zM204 206h1v2h-1zM203 208h1v2h-1zM202 210h1v2h-1zM201 212h1v2h-1zM200 214h1v2h-1zM199 216h1v2h-1zM198 218h1v2h-1zM199 218h1v2h-1zM221 176h1v2h-1zM222 178h1v2h-1zM223 180h1v2h-1zM224 182h1v2h-1zM225 184h1v2h-1zM226 186h1v2h-1zM227 188h1v2h-1zM228 190h1v2h-1zM229 192h1v2h-1zM230 194h1v6h-1zM229 200h1v2h-1zM228 202h1v2h-1zM227 204h1v2h-1zM226 206h1v2h-1zM225 208h1v2h-1zM224 210h1v2h-1zM223 212h1v2h-1zM222 214h1v2h-1zM221 216h1v2h-1zM220 218h1v2h-1zM221 218h1v2h-1zM1 220h1v2h-1zM2 222h1v2h-1zM3 224h1v2h-1zM4 226h1v2h-1zM5 228h1v2h-1zM6 230h1v2h-1zM7 232h1v2h-1zM8 234h1v2h-1zM9 236h1v2h-1zM10 238h1v6h-1zM9 244h1v2h-1zM8 246h1v2h-1zM7 248h1v2h-1zM6 250h1v2h-1zM5 252h1v2h-1zM4 254h1v2h-1zM3 256h1v2h-1zM2 258h1v2h-1zM1 260h1v2h-1zM0 262h1v2h-1zM23 220h1v2h-1zM24 222h1v2h-1zM25 224h1v2h-1zM26 226h1v2h-1zM27 228h1v2h-1zM28 230h1v2h-1zM29 232h1v2h-1zM30 234h1v2h-1zM31 236h1v2h-1zM32 238h1v6h-1zM31 244h1v2h-1zM30 246h1v2h-1zM29 248h1v2h-1zM28 250h1v2h-1zM27 252h1v2h-1zM26 254h1v2h-1zM25 256h1v2h-1zM24 258h1v2h-1zM23 260h1v2h-1zM22 262h1v2h-1zM23 262h1v2h-1zM45 220h1v2h-1zM46 222h1v2h-1zM47 224h1v2h-1zM48 226h1v2h-1zM49 228h1v2h-1zM50 230h1v2h-1zM51 232h1v2h-1zM52 234h1v2h-1zM53 236h1v2h-1zM54 238h1v6h-1zM53 244h1v2h-1zM52 246h1v2h-1zM51 248h1v2h-1zM50 250h1v2h-1zM49 252h1v2h-1zM48 254h1v2h-1zM47 256h1v2h-1zM46 258h1v2h-1zM45 260h1v2h-1zM44 262h1v2h-1zM45 262h1v2h-1zM67 220h1v2h-1zM68 222h1v2h-1zM69 224h1v2h-1zM70 226h1v2h-1zM71 228h1v2h-1zM72 230h1v2h-1zM73 232h1v2h-1zM74 234h1v2h-1zM75 236h1v2h-1zM76 238h1v6h-1zM75 244h1v2h-1zM74 246h1v2h-1zM73 248h1v2h-1zM72 250h1v2h-1zM71 252h1v2h-1zM70 254h1v2h-1zM69 256h1v2h-1zM68 258h1v2h-1zM67 260h1v2h-1zM66 262h1v2h-1zM67 262h1v2h-1zM89 220h1v2h-1zM90 222h1v2h-1zM91 224h1v2h-1zM92 226h1v2h-1zM93 228h1v2h-1zM94 230h1v2h-1zM95 232h1v2h-1zM96 234h1v2h-1zM97 236h1v2h-1zM98 238h1v6h-1zM97 244h1v2h-1zM96 246h1v2h-1zM95 248h1v2h-1zM94 250h1v2h-1zM93 252h1v2h-1zM92 254h1v2h-1zM91 256h1v2h-1zM90 258h1v2h-1zM89 260h1v2h-1zM88 262h1v2h-1zM89 262h1v2h-1zM111 220h1v2h-1zM112 222h1v2h-1zM113 224h1v2h-1zM114 226h1v2h-1zM115 228h1v2h-1zM116 230h1v2h-1zM117 232h1v2h-1zM118 234h1v2h-1zM119 236h1v2h-1zM120 238h1v6h-1zM119 244h1v2h-1zM118 246h1v2h-1zM117 248h1v2h-1zM116 250h1v2h-1zM115 252h1v2h-1zM114 254h1v2h-1zM113 256h1v2h-1zM112 258h1v2h-1zM111 260h1v2h-1zM110 262h1v2h-1zM111 262h1v2h-1zM133 220h1v2h-1zM134 222h1v2h-1zM135 224h1v2h-1zM136 226h1v2h-1zM137 228h1v2h-1zM138 230h1v2h-1zM139 232h1v2h-1zM140 234h1v2h-1zM141 236h1v2h-1zM142 238h1v6h-1zM141 244h1v2h-1zM140 246h1v2h-1zM139 248h1v2h-1zM138 250h1v2h-1zM137 252h1v2h-1zM136 254h1v2h-1zM135 256h1v2h-1zM134 258h1v2h-1zM133 260h1v2h-1zM132 262h1v2h-1zM133 262h1v2h-1zM155 220h1v2h-1zM156 222h1v2h-1zM157 224h1v2h-1zM158 226h1v2h-1zM159 228h1v2h-1zM160 230h1v2h-1zM161 232h1v2h-1zM162 234h1v2h-1zM163 236h1v2h-1zM164 238h1v6h-1zM163 244h1v2h-1zM162 246h1v2h-1zM161 248h1v2h-1zM160 250h1v2h-1zM159 252h1v2h-1zM158 254h1v2h-1zM157 256h1v2h-1zM156 258h1v2h-1zM155 260h1v2h-1zM154 262h1v2h-1zM155 262h1v2h-1zM177 220h1v2h-1zM178 222h1v2h-1zM179 224h1v2h-1zM180 226h1v2h-1zM181 228h1v2h-1zM182 230h1v2h-1zM183 232h1v2h-1zM184 234h1v2h-1zM185 236h1v2h-1zM186 238h1v6h-1zM185 244h1v2h-1zM184 246h1v2h-1zM183 248h1v2h-1zM182 250h1v2h-1zM181 252h1v2h-1zM180 254h1v2h-1zM179 256h1v2h-1zM178 258h1v2h-1zM177 260h1v2h-1zM176 262h1v2h-1zM177 262h1v2h-1zM199 220h1v2h-1zM200 222h1v2h-1zM201 224h1v2h-1zM202 226h1v2h-1zM203 228h1v2h-1zM204 230h1v2h-1zM205 232h1v2h-1zM206 234h1v2h-1zM207 236h1v2h-1zM208 238h1v6h-1zM207 244h1v2h-1zM206 246h1v2h-1zM205 248h1v2h-1zM204 250h1v2h-1zM203 252h1v2h-1zM202 254h1v2h-1zM201 256h1v2h-1zM200 258h1v2h-1zM199 260h1v2h-1zM198 262h1v2h-1zM199 262h1v2h-1zM221 220h1v2h-1zM222 222h1v2h-1zM223 224h1v2h-1zM224 226h1v2h-1zM225 228h1v2h-1zM226 230h1v2h-1zM227 232h1v2h-1zM228 234h1v2h-1zM229 236h1v2h-1zM230 238h1v6h-1zM229 244h1v2h-1zM228 246h1v2h-1zM227 248h1v2h-1zM226 250h1v2h-1zM225 252h1v2h-1zM224 254h1v2h-1zM223 256h1v2h-1zM222 258h1v2h-1zM221 260h1v2h-1zM220 262h1v2h-1zM221 262h1v2h-1zM1 264h1v2h-1zM2 266h1v2h-1zM3 268h1v2h-1zM4 270h1v2h-1zM5 272h1v2h-1zM6 274h1v2h-1zM7 276h1v2h-1zM8 278h1v2h-1zM9 280h1v2h-1zM10 282h1v6h-1zM9 288h1v2h-1zM8 290h1v2h-1zM7 292h1v2h-1zM6 294h1v2h-1zM5 296h1v2h-1zM4 298h1v2h-1zM3 300h1v2h-1zM2 302h1v2h-1zM1 304h1v2h-1zM0 306h1v2h-1zM23 264h1v2h-1zM24 266h1v2h-1zM25 268h1v2h-1zM26 270h1v2h-1zM27 272h1v2h-1zM28 274h1v2h-1zM29 276h1v2h-1zM30 278h1v2h-1zM31 280h1v2h-1zM32 282h1v6h-1zM31 288h1v2h-1zM30 290h1v2h-1zM29 292h1v2h-1zM28 294h1v2h-1zM27 296h1v2h-1zM26 298h1v2h-1zM25 300h1v2h-1zM24 302h1v2h-1zM23 304h1v2h-1zM22 306h1v2h-1zM23 306h1v2h-1zM45 264h1v2h-1zM46 266h1v2h-1zM47 268h1v2h-1zM48 270h1v2h-1zM49 272h1v2h-1zM50 274h1v2h-1zM51 276h1v2h-1zM52 278h1v2h-1zM53 280h1v2h-1zM54 282h1v6h-1zM53 288h1v2h-1zM52 290h1v2h-1zM51 292h1v2h-1zM50 294h1v2h-1zM49 296h1v2h-1zM48 298h1v2h-1zM47 300h1v2h-1zM46 302h1v2h-1zM45 304h1v2h-1zM44 306h1v2h-1zM45 306h1v2h-1zM67 264h1v2h-1zM68 266h1v2h-1zM69 268h1v2h-1zM70 270h1v2h-1zM71 272h1v2h-1zM72 274h1v2h-1zM73 276h1v2h-1zM74 278h1v2h-1zM75 280h1v2h-1zM76 282h1v6h-1zM75 288h1v2h-1zM74 290h1v2h-1zM73 292h1v2h-1zM72 294h1v2h-1zM71 296h1v2h-1zM70 298h1v2h-1zM69 300h1v2h-1zM68 302h1v2h-1zM67 304h1v2h-1zM66 306h1v2h-1zM67 306h1v2h-1zM89 264h1v2h-1zM90 266h1v2h-1zM91 268h1v2h-1zM92 270h1v2h-1zM93 272h1v2h-1zM94 274h1v2h-1zM95 276h1v2h-1zM96 278h1v2h-1zM97 280h1v2h-1zM98 282h1v6h-1zM97 288h1v2h-1zM96 290h1v2h-1zM95 292h1v2h-1zM94 294h1v2h-1zM93 296h1v2h-1zM92 298h1v2h-1zM91 300h1v2h-1zM90 302h1v2h-1zM89 304h1v2h-1zM88 306h1v2h-1zM89 306h1v2h-1zM111 264h1v2h-1zM112 266h1v2h-1zM113 268h1v2h-1zM114 270h1v2h-1zM115 272h1v2h-1zM116 274h1v2h-1zM117 276h1v2h-1zM118 278h1v2h-1zM119 280h1v2h-1zM120 282h1v6h-1zM119 288h1v2h-1zM118 290h1v2h-1zM117 292h1v2h-1zM116 294h1v2h-1zM115 296h1v2h-1zM114 298h1v2h-1zM113 300h1v2h-1zM112 302h1v2h-1zM111 304h1v2h-1zM110 306h1v2h-1zM111 306h1v2h-1zM133 264h1v2h-1zM134 266h1v2h-1zM135 268h1v2h-1zM136 270h1v2h-1zM137 272h1v2h-1zM138 274h1v2h-1zM139 276h1v2h-1zM140 278h1v2h-1zM141 280h1v2h-1zM142 282h1v6h-1zM141 288h1v2h-1zM140 290h1v2h-1zM139 292h1v2h-1zM138 294h1v2h-1zM137 296h1v2h-1zM136 298h1v2h-1zM135 300h1v2h-1zM134 302h1v2h-1zM133 304h1v2h-1zM132 306h1v2h-1zM133 306h1v2h-1zM155 264h1v2h-1zM156 266h1v2h-1zM157 268h1v2h-1zM158 270h1v2h-1zM159 272h1v2h-1zM160 274h1v2h-1zM161 276h1v2h-1zM162 278h1v2h-1zM163 280h1v2h-1zM164 282h1v6h-1zM163 288h1v2h-1zM162 290h1v2h-1zM161 292h1v2h-1zM160 294h1v2h-1zM159 296h1v2h-1zM158 298h1v2h-1zM157 300h1v2h-1zM156 302h1v2h-1zM155 304h1v2h-1zM154 306h1v2h-1zM155 306h1v2h-1zM177 264h1v2h-1zM178 266h1v2h-1zM179 268h1v2h-1zM180 270h1v2h-1zM181 272h1v2h-1zM182 274h1v2h-1zM183 276h1v2h-1zM184 278h1v2h-1zM185 280h1v2h-1zM186 282h1v6h-1zM185 288h1v2h-1zM184 290h1v2h-1zM183 292h1v2h-1zM182 294h1v2h-1zM181 296h1v2h-1zM180 298h1v2h-1zM179 300h1v2h-1zM178 302h1v2h-1zM177 304h1v2h-1zM176 306h1v2h-1zM177 306h1v2h-1zM199 264h1v2h-1zM200 266h1v2h-1zM201 268h1v2h-1zM202 270h1v2h-1zM203 272h1v2h-1zM204 274h1v2h-1zM205 276h1v2h-1zM206 278h1v2h-1zM207 280h1v2h-1zM208 282h1v6h-1zM207 288h1v2h-1zM206 290h1v2h-1zM205 292h1v2h-1zM204 294h1v2h-1zM203 296h1v2h-1zM202 298h1v2h-1zM201 300h1v2h-1zM200 302h1v2h-1zM199 304h1v2h-1zM198 306h1v2h-1zM199 306h1v2h-1zM221 264h1v2h-1zM222 266h1v2h-1zM223 268h1v2h-1zM224 270h1v2h-1zM225 272h1v2h-1zM226 274h1v2h-1zM227 276h1v2h-1zM228 278h1v2h-1zM229 280h1v2h-1zM230 282h1v6h-1zM229 288h1v2h-1zM228 290h1v2h-1zM227 292h1v2h-1zM226 294h1v2h-1zM225 296h1v2h-1zM224 298h1v2h-1zM223 300h1v2h-1zM222 302h1v2h-1zM221 304h1v2h-1zM220 306h1v2h-1zM221 306h1v2h-1zM1 308h1v2h-1zM2 310h1v2h-1zM3 312h1v2h-1zM4 314h1v2h-1zM5 316h1v2h-1zM6 318h1v2h-1zM7 320h1v2h-1zM8 322h1v2h-1zM9 324h1v2h-1zM10 326h1v6h-1zM9 332h1v2h-1zM8 334h1v2h-1zM7 336h1v2h-1zM6 338h1v2h-1zM5 340h1v2h-1zM4 342h1v2h-1zM3 344h1v2h-1zM2 346h1v2h-1zM1 348h1v2h-1zM0 350h1v2h-1zM23 308h1v2h-1zM24 310h1v2h-1zM25 312h1v2h-1zM26 314h1v2h-1zM27 316h1v2h-1zM28 318h1v2h-1zM29 320h1v2h-1zM30 322h1v2h-1zM31 324h1v2h-1zM32 326h1v6h-1zM31 332h1v2h-1zM30 334h1v2h-1zM29 336h1v2h-1zM28 338h1v2h-1zM27 340h1v2h-1zM26 342h1v2h-1zM25 344h1v2h-1zM24 346h1v2h-1zM23 348h1v2h-1zM22 350h1v2h-1zM23 350h1v2h-1zM45 308h1v2h-1zM46 310h1v2h-1zM47 312h1v2h-1zM48 314h1v2h-1zM49 316h1v2h-1zM50 318h1v2h-1zM51 320h1v2h-1zM52 322h1v2h-1zM53 324h1v2h-1zM54 326h1v6h-1zM53 332h1v2h-1zM52 334h1v2h-1zM51 336h1v2h-1zM50 338h1v2h-1zM49 340h1v2h-1zM48 342h1v2h-1zM47 344h1v2h-1zM46 346h1v2h-1zM45 348h1v2h-1zM44 350h1v2h-1zM45 350h1v2h-1zM67 308h1v2h-1zM68 310h1v2h-1zM69 312h1v2h-1zM70 314h1v2h-1zM71 316h1v2h-1zM72 318h1v2h-1zM73 320h1v2h-1zM74 322h1v2h-1zM75 324h1v2h-1zM76 326h1v6h-1zM75 332h1v2h-1zM74 334h1v2h-1zM73 336h1v2h-1zM72 338h1v2h-1zM71 340h1v2h-1zM70 342h1v2h-1zM69 344h1v2h-1zM68 346h1v2h-1zM67 348h1v2h-1zM66 350h1v2h-1zM67 350h1v2h-1zM89 308h1v2h-1zM90 310h1v2h-1zM91 312h1v2h-1zM92 314h1v2h-1zM93 316h1v2h-1zM94 318h1v2h-1zM95 320h1v2h-1zM96 322h1v2h-1zM97 324h1v2h-1zM98 326h1v6h-1zM97 332h1v2h-1zM96 334h1v2h-1zM95 336h1v2h-1zM94 338h1v2h-1zM93 340h1v2h-1zM92 342h1v2h-1zM91 344h1v2h-1zM90 346h1v2h-1zM89 348h1v2h-1zM88 350h1v2h-1zM89 350h1v2h-1zM111 308h1v2h-1zM112 310h1v2h-1zM113 312h1v2h-1zM114 314h1v2h-1zM115 316h1v2h-1zM116 318h1v2h-1zM117 320h1v2h-1zM118 322h1v2h-1zM119 324h1v2h-1zM120 326h1v6h-1zM119 332h1v2h-1zM118 334h1v2h-1zM117 336h1v2h-1zM116 338h1v2h-1zM115 340h1v2h-1zM114 342h1v2h-1zM113 344h1v2h-1zM112 346h1v2h-1zM111 348h1v2h-1zM110 350h1v2h-1zM111 350h1v2h-1zM133 308h1v2h-1zM134 310h1v2h-1zM135 312h1v2h-1zM136 314h1v2h-1zM137 316h1v2h-1zM138 318h1v2h-1zM139 320h1v2h-1zM140 322h1v2h-1zM141 324h1v2h-1zM142 326h1v6h-1zM141 332h1v2h-1zM140 334h1v2h-1zM139 336h1v2h-1zM138 338h1v2h-1zM137 340h1v2h-1zM136 342h1v2h-1zM135 344h1v2h-1zM134 346h1v2h-1zM133 348h1v2h-1zM132 350h1v2h-1zM133 350h1v2h-1zM155 308h1v2h-1zM156 310h1v2h-1zM157 312h1v2h-1zM158 314h1v2h-1zM159 316h1v2h-1zM160 318h1v2h-1zM161 320h1v2h-1zM162 322h1v2h-1zM163 324h1v2h-1zM164 326h1v6h-1zM163 332h1v2h-1zM162 334h1v2h-1zM161 336h1v2h-1zM160 338h1v2h-1zM159 340h1v2h-1zM158 342h1v2h-1zM157 344h1v2h-1zM156 346h1v2h-1zM155 348h1v2h-1zM154 350h1v2h-1zM155 350h1v2h-1zM177 308h1v2h-1zM178 310h1v2h-1zM179 312h1v2h-1zM180 314h1v2h-1zM181 316h1v2h-1zM182 318h1v2h-1zM183 320h1v2h-1zM184 322h1v2h-1zM185 324h1v2h-1zM186 326h1v6h-1zM185 332h1v2h-1zM184 334h1v2h-1zM183 336h1v2h-1zM182 338h1v2h-1zM181 340h1v2h-1zM180 342h1v2h-1zM179 344h1v2h-1zM178 346h1v2h-1zM177 348h1v2h-1zM176 350h1v2h-1zM177 350h1v2h-1zM199 308h1v2h-1zM200 310h1v2h-1zM201 312h1v2h-1zM202 314h1v2h-1zM203 316h1v2h-1zM204 318h1v2h-1zM205 320h1v2h-1zM206 322h1v2h-1zM207 324h1v2h-1zM208 326h1v6h-1zM207 332h1v2h-1zM206 334h1v2h-1zM205 336h1v2h-1zM204 338h1v2h-1zM203 340h1v2h-1zM202 342h1v2h-1zM201 344h1v2h-1zM200 346h1v2h-1zM199 348h1v2h-1zM198 350h1v2h-1zM199 350h1v2h-1zM221 308h1v2h-1zM222 310h1v2h-1zM223 312h1v2h-1zM224 314h1v2h-1zM225 316h1v2h-1zM226 318h1v2h-1zM227 320h1v2h-1zM228 322h1v2h-1zM229 324h1v2h-1zM230 326h1v6h-1zM229 332h1v2h-1zM228 334h1v2h-1zM227 336h1v2h-1zM226 338h1v2h-1zM225 340h1v2h-1zM224 342h1v2h-1zM223 344h1v2h-1zM222 346h1v2h-1zM221 348h1v2h-1zM220 350h1v2h-1zM221 350h1v2h-1zM1 352h1v2h-1zM2 354h1v2h-1zM3 356h1v2h-1zM4 358h1v2h-1zM5 360h1v2h-1zM6 362h1v2h-1zM7 364h1v2h-1zM8 366h1v2h-1zM9 368h1v2h-1zM10 370h1v6h-1zM9 376h1v2h-1zM8 378h1v2h-1zM7 380h1v2h-1zM6 382h1v2h-1zM5 384h1v2h-1zM4 386h1v2h-1zM3 388h1v2h-1zM2 390h1v2h-1zM1 392h1v2h-1zM0 394h1v2h-1zM23 352h1v2h-1zM24 354h1v2h-1zM25 356h1v2h-1zM26 358h1v2h-1zM27 360h1v2h-1zM28 362h1v2h-1zM29 364h1v2h-1zM30 366h1v2h-1zM31 368h1v2h-1zM32 370h1v6h-1zM31 376h1v2h-1zM30 378h1v2h-1zM29 380h1v2h-1zM28 382h1v2h-1zM27 384h1v2h-1zM26 386h1v2h-1zM25 388h1v2h-1zM24 390h1v2h-1zM23 392h1v2h-1zM22 394h1v2h-1zM23 394h1v2h-1zM45 352h1v2h-1zM46 354h1v2h-1zM47 356h1v2h-1zM48 358h1v2h-1zM49 360h1v2h-1zM50 362h1v2h-1zM51 364h1v2h-1zM52 366h1v2h-1zM53 368h1v2h-1zM54 370h1v6h-1zM53 376h1v2h-1zM52 378h1v2h-1zM51 380h1v2h-1zM50 382h1v2h-1zM49 384h1v2h-1zM48 386h1v2h-1zM47 388h1v2h-1zM46 390h1v2h-1zM45 392h1v2h-1zM44 394h1v2h-1zM45 394h1v2h-1zM67 352h1v2h-1zM68 354h1v2h-1zM69 356h1v2h-1zM70 358h1v2h-1zM71 360h1v2h-1zM72 362h1v2h-1zM73 364h1v2h-1zM74 366h1v2h-1zM75 368h1v2h-1zM76 370h1v6h-1zM75 376h1v2h-1zM74 378h1v2h-1zM73 380h1v2h-1zM72 382h1v2h-1zM71 384h1v2h-1zM70 386h1v2h-1zM69 388h1v2h-1zM68 390h1v2h-1zM67 392h1v2h-1zM66 394h1v2h-1zM67 394h1v2h-1zM89 352h1v2h-1zM90 354h1v2h-1zM91 356h1v2h-1zM92 358h1v2h-1zM93 360h1v2h-1zM94 362h1v2h-1zM95 364h1v2h-1zM96 366h1v2h-1zM97 368h1v2h-1zM98 370h1v6h-1zM97 376h1v2h-1zM96 378h1v2h-1zM95 380h1v2h-1zM94 382h1v2h-1zM93 384h1v2h-1zM92 386h1v2h-1zM91 388h1v2h-1zM90 390h1v2h-1zM89 392h1v2h-1zM88 394h1v2h-1zM89 394h1v2h-1zM111 352h1v2h-1zM112 354h1v2h-1zM113 356h1v2h-1zM114 358h1v2h-1zM115 360h1v2h-1zM116 362h1v2h-1zM117 364h1v2h-1zM118 366h1v2h-1zM119 368h1v2h-1zM120 370h1v6h-1zM119 376h1v2h-1zM118 378h1v2h-1zM117 380h1v2h-1zM116 382h1v2h-1zM115 384h1v2h-1zM114 386h1v2h-1zM113 388h1v2h-1zM112 390h1v2h-1zM111 392h1v2h-1zM110 394h1v2h-1zM111 394h1v2h-1zM133 352h1v2h-1zM134 354h1v2h-1zM135 356h1v2h-1zM136 358h1v2h-1zM137 360h1v2h-1zM138 362h1v2h-1zM139 364h1v2h-1zM140 366h1v2h-1zM141 368h1v2h-1zM142 370h1v6h-1zM141 376h1v2h-1zM140 378h1v2h-1zM139 380h1v2h-1zM138 382h1v2h-1zM137 384h1v2h-1zM136 386h1v2h-1zM135 388h1v2h-1zM134 390h1v2h-1zM133 392h1v2h-1zM132 394h1v2h-1zM133 394h1v2h-1zM155 352h1v2h-1zM156 354h1v2h-1zM157 356h1v2h-1zM158 358h1v2h-1zM159 360h1v2h-1zM160 362h1v2h-1zM161 364h1v2h-1zM162 366h1v2h-1zM163 368h1v2h-1zM164 370h1v6h-1zM163 376h1v2h-1zM162 378h1v2h-1zM161 380h1v2h-1zM160 382h1v2h-1zM159 384h1v2h-1zM158 386h1v2h-1zM157 388h1v2h-1zM156 390h1v2h-1zM155 392h1v2h-1zM154 394h1v2h-1zM155 394h1v2h-1zM177 352h1v2h-1zM178 354h1v2h-1zM179 356h1v2h-1zM180 358h1v2h-1zM181 360h1v2h-1zM182 362h1v2h-1zM183 364h1v2h-1zM184 366h1v2h-1zM185 368h1v2h-1zM186 370h1v6h-1zM185 376h1v2h-1zM184 378h1v2h-1zM183 380h1v2h-1zM182 382h1v2h-1zM181 384h1v2h-1zM180 386h1v2h-1zM179 388h1v2h-1zM178 390h1v2h-1zM177 392h1v2h-1zM176 394h1v2h-1zM177 394h1v2h-1zM199 352h1v2h-1zM200 354h1v2h-1zM201 356h1v2h-1zM202 358h1v2h-1zM203 360h1v2h-1zM204 362h1v2h-1zM205 364h1v2h-1zM206 366h1v2h-1zM207 368h1v2h-1zM208 370h1v6h-1zM207 376h1v2h-1zM206 378h1v2h-1zM205 380h1v2h-1zM204 382h1v2h-1zM203 384h1v2h-1zM202 386h1v2h-1zM201 388h1v2h-1zM200 390h1v2h-1zM199 392h1v2h-1zM198 394h1v2h-1zM199 394h1v2h-1zM221 352h1v2h-1zM222 354h1v2h-1zM223 356h1v2h-1zM224 358h1v2h-1zM225 360h1v2h-1zM226 362h1v2h-1zM227 364h1v2h-1zM228 366h1v2h-1zM229 368h1v2h-1zM230 370h1v6h-1zM229 376h1v2h-1zM228 378h1v2h-1zM227 380h1v2h-1zM226 382h1v2h-1zM225 384h1v2h-1zM224 386h1v2h-1zM223 388h1v2h-1zM222 390h1v2h-1zM221 392h1v2h-1zM220 394h1v2h-1zM221 394h1v2h-1zM1 396h1v2h-1zM2 398h1v2h-1zM3 400h1v2h-1zM4 402h1v2h-1zM5 404h1v2h-1zM6 406h1v2h-1zM7 408h1v2h-1zM8 410h1v2h-1zM9 412h1v2h-1zM10 414h1v6h-1zM9 420h1v2h-1zM8 422h1v2h-1zM7 424h1v2h-1zM6 426h1v2h-1zM5 428h1v2h-1zM4 430h1v2h-1zM3 432h1v2h-1zM2 434h1v2h-1zM1 436h1v2h-1zM0 438h1v2h-1zM23 396h1v2h-1zM24 398h1v2h-1zM25 400h1v2h-1zM26 402h1v2h-1zM27 404h1v2h-1zM28 406h1v2h-1zM29 408h1v2h-1zM30 410h1v2h-1zM31 412h1v2h-1zM32 414h1v6h-1zM31 420h1v2h-1zM30 422h1v2h-1zM29 424h1v2h-1zM28 426h1v2h-1zM27 428h1v2h-1zM26 430h1v2h-1zM25 432h1v2h-1zM24 434h1v2h-1zM23 436h1v2h-1zM22 438h1v2h-1zM23 438h1v2h-1zM45 396h1v2h-1zM46 398h1v2h-1zM47 400h1v2h-1zM48 402h1v2h-1zM49 404h1v2h-1zM50 406h1v2h-1zM51 408h1v2h-1zM52 410h1v2h-1zM53 412h1v2h-1zM54 414h1v6h-1zM53 420h1v2h-1zM52 422h1v2h-1zM51 424h1v2h-1zM50 426h1v2h-1zM49 428h1v2h-1zM48 430h1v2h-1zM47 432h1v2h-1zM46 434h1v2h-1zM45 436h1v2h-1zM44 438h1v2h-1zM45 438h1v2h-1zM67 396h1v2h-1zM68 398h1v2h-1zM69 400h1v2h-1zM70 402h1v2h-1zM71 404h1v2h-1zM72 406h1v2h-1zM73 408h1v2h-1zM74 410h1v2h-1zM75 412h1v2h-1zM76 414h1v6h-1zM75 420h1v2h-1zM74 422h1v2h-1zM73 424h1v2h-1zM72 426h1v2h-1zM71 428h1v2h-1zM70 430h1v2h-1zM69 432h1v2h-1zM68 434h1v2h-1zM67 436h1v2h-1zM66 438h1v2h-1zM67 438h1v2h-1zM89 396h1v2h-1zM90 398h1v2h-1zM91 400h1v2h-1zM92 402h1v2h-1zM93 404h1v2h-1zM94 406h1v2h-1zM95 408h1v2h-1zM96 410h1v2h-1zM97 412h1v2h-1zM98 414h1v6h-1zM97 420h1v2h-1zM96 422h1v2h-1zM95 424h1v2h-1zM94 426h1v2h-1zM93 428h1v2h-1zM92 430h1v2h-1zM91 432h1v2h-1zM90 434h1v2h-1zM89 436h1v2h-1zM88 438h1v2h-1zM89 438h1v2h-1zM111 396h1v2h-1zM112 398h1v2h-1zM113 400h1v2h-1zM114 402h1v2h-1zM115 404h1v2h-1zM116 406h1v2h-1zM117 408h1v2h-1zM118 410h1v2h-1zM119 412h1v2h-1zM120 414h1v6h-1zM119 420h1v2h-1zM118 422h1v2h-1zM117 424h1v2h-1zM116 426h1v2h-1zM115 428h1v2h-1zM114 430h1v2h-1zM113 432h1v2h-1zM112 434h1v2h-1zM111 436h1v2h-1zM110 438h1v2h-1zM111 438h1v2h-1zM133 396h1v2h-1zM134 398h1v2h-1zM135 400h1v2h-1zM136 402h1v2h-1zM137 404h1v2h-1zM138 406h1v2h-1zM139 408h1v2h-1zM140 410h1v2h-1zM141 412h1v2h-1zM142 414h1v6h-1zM141 420h1v2h-1zM140 422h1v2h-1zM139 424h1v2h-1zM138 426h1v2h-1zM137 428h1v2h-1zM136 430h1v2h-1zM135 432h1v2h-1zM134 434h1v2h-1zM133 436h1v2h-1zM132 438h1v2h-1zM133 438h1v2h-1zM155 396h1v2h-1zM156 398h1v2h-1zM157 400h1v2h-1zM158 402h1v2h-1zM159 404h1v2h-1zM160 406h1v2h-1zM161 408h1v2h-1zM162 410h1v2h-1zM163 412h1v2h-1zM164 414h1v6h-1zM163 420h1v2h-1zM162 422h1v2h-1zM161 424h1v2h-1zM160 426h1v2h-1zM159 428h1v2h-1zM158 430h1v2h-1zM157 432h1v2h-1zM156 434h1v2h-1zM155 436h1v2h-1zM154 438h1v2h-1zM155 438h1v2h-1zM177 396h1v2h-1zM178 398h1v2h-1zM179 400h1v2h-1zM180 402h1v2h-1zM181 404h1v2h-1zM182 406h1v2h-1zM183 408h1v2h-1zM184 410h1v2h-1zM185 412h1v2h-1zM186 414h1v6h-1zM185 420h1v2h-1zM184 422h1v2h-1zM183 424h1v2h-1zM182 426h1v2h-1zM181 428h1v2h-1zM180 430h1v2h-1zM179 432h1v2h-1zM178 434h1v2h-1zM177 436h1v2h-1zM176 438h1v2h-1zM177 438h1v2h-1zM199 396h1v2h-1zM200 398h1v2h-1zM201 400h1v2h-1zM202 402h1v2h-1zM203 404h1v2h-1zM204 406h1v2h-1zM205 408h1v2h-1zM206 410h1v2h-1zM207 412h1v2h-1zM208 414h1v6h-1zM207 420h1v2h-1zM206 422h1v2h-1zM205 424h1v2h-1zM204 426h1v2h-1zM203 428h1v2h-1zM202 430h1v2h-1zM201 432h1v2h-1zM200 434h1v2h-1zM199 436h1v2h-1zM198 438h1v2h-1zM199 438h1v2h-1zM221 396h1v2h-1zM222 398h1v2h-1zM223 400h1v2h-1zM224 402h1v2h-1zM225 404h1v2h-1zM226 406h1v2h-1zM227 408h1v2h-1zM228 410h1v2h-1zM229 412h1v2h-1zM230 414h1v6h-1zM229 420h1v2h-1zM228 422h1v2h-1zM227 424h1v2h-1zM226 426h1v2h-1zM225 428h1v2h-1zM224 430h1v2h-1zM223 432h1v2h-1zM222 434h1v2h-1zM221 436h1v2h-1zM220 438h1v2h-1zM221 438h1v2h-1zM1 440h1v2h-1zM2 442h1v2h-1zM3 444h1v2h-1zM4 446h1v2h-1zM5 448h1v2h-1zM6 450h1v2h-1zM7 452h1v2h-1zM8 454h1v2h-1zM9 456h1v2h-1zM10 458h1v6h-1zM9 464h1v2h-1zM8 466h1v2h-1zM7 468h1v2h-1zM6 470h1v2h-1zM5 472h1v2h-1zM4 474h1v2h-1zM3 476h1v2h-1zM2 478h1v2h-1zM1 480h1v2h-1zM0 482h1v2h-1zM23 440h1v2h-1zM24 442h1v2h-1zM25 444h1v2h-1zM26 446h1v2h-1zM27 448h1v2h-1zM28 450h1v2h-1zM29 452h1v2h-1zM30 454h1v2h-1zM31 456h1v2h-1zM32 458h1v6h-1zM31 464h1v2h-1zM30 466h1v2h-1zM29 468h1v2h-1zM28 470h1v2h-1zM27 472h1v2h-1zM26 474h1v2h-1zM25 476h1v2h-1zM24 478h1v2h-1zM23 480h1v2h-1zM22 482h1v2h-1zM23 482h1v2h-1zM45 440h1v2h-1zM46 442h1v2h-1zM47 444h1v2h-1zM48 446h1v2h-1zM49 448h1v2h-1zM50 450h1v2h-1zM51 452h1v2h-1zM52 454h1v2h-1zM53 456h1v2h-1zM54 458h1v6h-1zM53 464h1v2h-1zM52 466h1v2h-1zM51 468h1v2h-1zM50 470h1v2h-1zM49 472h1v2h-1zM48 474h1v2h-1zM47 476h1v2h-1zM46 478h1v2h-1zM45 480h1v2h-1zM44 482h1v2h-1zM45 482h1v2h-1zM67 440h1v2h-1zM68 442h1v2h-1zM69 444h1v2h-1zM70 446h1v2h-1zM71 448h1v2h-1zM72 450h1v2h-1zM73 452h1v2h-1zM74 454h1v2h-1zM75 456h1v2h-1zM76 458h1v6h-1zM75 464h1v2h-1zM74 466h1v2h-1zM73 468h1v2h-1zM72 470h1v2h-1zM71 472h1v2h-1zM70 474h1v2h-1zM69 476h1v2h-1zM68 478h1v2h-1zM67 480h1v2h-1zM66 482h1v2h-1zM67 482h1v2h-1zM89 440h1v2h-1zM90 442h1v2h-1zM91 444h1v2h-1zM92 446h1v2h-1zM93 448h1v2h-1zM94 450h1v2h-1zM95 452h1v2h-1zM96 454h1v2h-1zM97 456h1v2h-1zM98 458h1v6h-1zM97 464h1v2h-1zM96 466h1v2h-1zM95 468h1v2h-1zM94 470h1v2h-1zM93 472h1v2h-1zM92 474h1v2h-1zM91 476h1v2h-1zM90 478h1v2h-1zM89 480h1v2h-1zM88 482h1v2h-1zM89 482h1v2h-1zM111 440h1v2h-1zM112 442h1v2h-1zM113 444h1v2h-1zM114 446h1v2h-1zM115 448h1v2h-1zM116 450h1v2h-1zM117 452h1v2h-1zM118 454h1v2h-1zM119 456h1v2h-1zM120 458h1v6h-1zM119 464h1v2h-1zM118 466h1v2h-1zM117 468h1v2h-1zM116 470h1v2h-1zM115 472h1v2h-1zM114 474h1v2h-1zM113 476h1v2h-1zM112 478h1v2h-1zM111 480h1v2h-1zM110 482h1v2h-1zM111 482h1v2h-1zM133 440h1v2h-1zM134 442h1v2h-1zM135 444h1v2h-1zM136 446h1v2h-1zM137 448h1v2h-1zM138 450h1v2h-1zM139 452h1v2h-1zM140 454h1v2h-1zM141 456h1v2h-1zM142 458h1v6h-1zM141 464h1v2h-1zM140 466h1v2h-1zM139 468h1v2h-1zM138 470h1v2h-1zM137 472h1v2h-1zM136 474h1v2h-1zM135 476h1v2h-1zM134 478h1v2h-1zM133 480h1v2h-1zM132 482h1v2h-1zM133 482h1v2h-1zM155 440h1v2h-1zM156 442h1v2h-1zM157 444h1v2h-1zM158 446h1v2h-1zM159 448h1v2h-1zM160 450h1v2h-1zM161 452h1v2h-1zM162 454h1v2h-1zM163 456h1v2h-1zM164 458h1v6h-1zM163 464h1v2h-1zM162 466h1v2h-1zM161 468h1v2h-1zM160 470h1v2h-1zM159 472h1v2h-1zM158 474h1v2h-1zM157 476h1v2h-1zM156 478h1v2h-1zM155 480h1v2h-1zM154 482h1v2h-1zM155 482h1v2h-1zM177 440h1v2h-1zM178 442h1v2h-1zM179 444h1v2h-1zM180 446h1v2h-1zM181 448h1v2h-1zM182 450h1v2h-1zM183 452h1v2h-1zM184 454h1v2h-1zM185 456h1v2h-1zM186 458h1v6h-1zM185 464h1v2h-1zM184 466h1v2h-1zM183 468h1v2h-1zM182 470h1v2h-1zM181 472h1v2h-1zM180 474h1v2h-1zM179 476h1v2h-1zM178 478h1v2h-1zM177 480h1v2h-1zM176 482h1v2h-1zM177 482h1v2h-1zM199 440h1v2h-1zM200 442h1v2h-1zM201 444h1v2h-1zM202 446h1v2h-1zM203 448h1v2h-1zM204 450h1v2h-1zM205 452h1v2h-1zM206 454h1v2h-1zM207 456h1v2h-1zM208 458h1v6h-1zM207 464h1v2h-1zM206 466h1v2h-1zM205 468h1v2h-1zM204 470h1v2h-1zM203 472h1v2h-1zM202 474h1v2h-1zM201 476h1v2h-1zM200 478h1v2h-1zM199 480h1v2h-1zM198 482h1v2h-1zM199 482h1v2h-1zM221 440h1v2h-1zM222 442h1v2h-1zM223 444h1v2h-1zM224 446h1v2h-1zM225 448h1v2h-1zM226 450h1v2h-1zM227 452h1v2h-1zM228 454h1v2h-1zM229 456h1v2h-1zM230 458h1v6h-1zM229 464h1v2h-1zM228 466h1v2h-1zM227 468h1v2h-1zM226 470h1v2h-1zM225 472h1v2h-1zM224 474h1v2h-1zM223 476h1v2h-1zM222 478h1v2h-1zM221 480h1v2h-1zM220 482h1v2h-1zM221 482h1v2h-1z"/><path fill="#00FF40" d="M21 0h1v2h-1zM20 2h1v2h-1zM19 4h1v2h-1zM18 6h1v2h-1zM17 8h1v2h-1zM16 10h1v2h-1zM15 12h1v2h-1zM14 14h1v2h-1zM13 16h1v2h-1zM12 18h1v2h-1zM11 20h1v2h-1zM12 22h1v2h-1zM13 24h1v2h-1zM14 26h1v2h-1zM15 28h1v2h-1zM16 30h1v2h-1zM17 32h1v2h-1zM18 34h1v2h-1zM19 36h1v2h-1zM20 38h1v2h-1zM21 40h1v2h-1zM22 42h1v2h-1zM43 0h1v2h-1zM42 2h1v2h-1zM41 4h1v2h-1zM40 6h1v2h-1zM39 8h1v2h-1zM38 10h1v2h-1zM37 12h1v2h-1zM36 14h1v2h-1zM35 16h1v2h-1zM34 18h1v2h-1zM33 20h1v2h-1zM34 22h1v2h-1zM35 24h1v2h-1zM36 26h1v2h-1zM37 28h1v2h-1zM38 30h1v2h-1zM39 32h1v2h-1zM40 34h1v2h-1zM41 36h1v2h-1zM42 38h1v2h-1zM43 40h1v2h-1zM44 42h1v2h-1zM65 0h1v2h-1zM64 2h1v2h-1zM63 4h1v2h-1zM62 6h1v2h-1zM61 8h1v2h-1zM60 10h1v2h-1zM59 12h1v2h-1zM58 14h1v2h-1zM57 16h1v2h-1zM56 18h1v2h-1zM55 20h1v2h-1zM56 22h1v2h-1zM57 24h1v2h-1zM58 26h1v2h-1zM59 28h1v2h-1zM60 30h1v2h-1zM61 32h1v2h-1zM62 34h1v2h-1zM63 36h1v2h-1zM64 38h1v2h-1zM65 40h1v2h-1zM66 42h1v2h-1zM87 0h1v2h-1zM86 2h1v2h-1zM85 4h1v2h-1zM84 6h1v2h-1zM83 8h1v2h-1zM82 10h1v2h-1zM81 12h1v2h-1zM80 14h1v2h-1zM79 16h1v2h-1zM78 18h1v2h-1zM77 20h1v2h-1zM78 22h1v2h-1zM79 24h1v2h-1zM80 26h1v2h-1zM81 28h1v2h-1zM82 30h1v2h-1zM83 32h1v2h-1zM84 34h1v2h-1zM85 36h1v2h-1zM86 38h1v2h-1zM87 40h1v2h-1zM88 42h1v2h-1zM109 0h1v2h-1zM108 2h1v2h-1zM107 4h1v2h-1zM106 6h1v2h-1zM105 8h1v2h-1zM104 10h1v2h-1zM103 12h1v2h-1zM102 14h1v2h-1zM101 16h1v2h-1zM100 18h1v2h-1zM99 20h1v2h-1zM100 22h1v2h-1zM101 24h1v2h-1zM102 26h1v2h-1zM103 28h1v2h-1zM104 30h1v2h-1zM105 32h1v2h-1zM106 34h1v2h-1zM107 36h1v2h-1zM108 38h1v2h-1zM109 40h1v2h-1zM110 42h1v2h-1zM131 0h1v2h-1zM130 2h1v2h-1zM129 4h1v2h-1zM128 6h1v2h-1zM127 8h1v2h-1zM126 10h1v2h-1zM125 12h1v2h-1zM124 14h1v2h-1zM123 16h1v2h-1zM122 18h1v2h-1zM121 20h1v2h-1zM122 22h1v2h-1zM123 24h1v2h-1zM124 26h1v2h-1zM125 28h1v2h-1zM126 30h1v2h-1zM127 32h1v2h-1zM128 34h1v2h-1zM129 36h1v2h-1zM130 38h1v2h-1zM131 40h1v2h-1zM132 42h1v2h-1zM153 0h1v2h-1zM152 2h1v2h-1zM151 4h1v2h-1zM150 6h1v2h-1zM149 8h1v2h-1zM148 10h1v2h-1zM147 12h1v2h-1zM146 14h1v2h-1zM145 16h1v2h-1zM144 18h1v2h-1zM143 20h1v2h-1zM144 22h1v2h-1zM145 24h1v2h-1zM146 26h1v2h-1zM147 28h1v2h-1zM148 30h1v2h-1zM149 32h1v2h-1zM150 34h1v2h-1zM151 36h1v2h-1zM152 38h1v2h-1zM153 40h1v2h-1zM154 42h1v2h-1zM175 0h1v2h-1zM174 2h1v2h-1zM173 4h1v2h-1zM172 6h1v2h-1zM171 8h1v2h-1zM170 10h1v2h-1zM169 12h1v2h-1zM168 14h1v2h-1zM167 16h1v2h-1zM166 18h1v2h-1zM165 20h1v2h-1zM166 22h1v2h-1zM167 24h1v2h-1zM168 26h1v2h-1zM169 28h1v2h-1zM170 30h1v2h-1zM171 32h1v2h-1zM172 34h1v2h-1zM173 36h1v2h-1zM174 38h1v2h-1zM175 40h1v2h-1zM176 42h1v2h-1zM197 0h1v2h-1zM196 2h1v2h-1zM195 4h1v2h-1zM194 6h1v2h-1zM193 8h1v2h-1zM192 10h1v2h-1zM191 12h1v2h-1zM190 14h1v2h-1zM189 16h1v2h-1zM188 18h1v2h-1zM187 20h1v2h-1zM188 22h1v2h-1zM189 24h1v2h-1zM190 26h1v2h-1zM191 28h1v2h-1zM192 30h1v2h-1zM193 32h1v2h-1zM194 34h1v2h-1zM195 36h1v2h-1zM196 38h1v2h-1zM197 40h1v2h-1zM198 42h1v2h-1zM219 0h1v2h-1zM218 2h1v2h-1zM217 4h1v2h-1zM216 6h1v2h-1zM215 8h1v2h-1zM214 10h1v2h-1zM213 12h1v2h-1zM212 14h1v2h-1zM211 16h1v2h-1zM210 18h1v2h-1zM209 20h1v2h-1zM210 22h1v2h-1zM211 24h1v2h-1zM212 26h1v2h-1zM213 28h1v2h-1zM214 30h1v2h-1zM215 32h1v2h-1zM216 34h1v2h-1zM217 36h1v2h-1zM218 38h1v2h-1zM219 40h1v2h-1zM220 42h1v2h-1zM241 0h1v2h-1zM240 2h1v2h-1zM239 4h1v2h-1zM238 6h1v2h-1zM237 8h1v2h-1zM236 10h1v2h-1zM235 12h1v2h-1zM234 14h1v2h-1zM233 16h1v2h-1zM232 18h1v2h-1zM231 20h1v2h-1zM232 22h1v2h-1zM233 24h1v2h-1zM234 26h1v2h-1zM235 28h1v2h-1zM236 30h1v2h-1zM237 32h1v2h-1zM238 34h1v2h-1zM239 36h1v2h-1zM240 38h1v2h-1zM241 40h1v2h-1zM242 42h1v2h-1zM21 44h1v2h-1zM20 46h1v2h-1zM19 48h1v2h-1zM18 50h1v2h-1zM17 52h1v2h-1zM16 54h1v2h-1zM15 56h1v2h-1zM14 58h1v2h-1zM13 60h1v2h-1zM12 62h1v2h-1zM11 64h1v2h-1zM12 66h1v2h-1zM13 68h1v2h-1zM14 70h1v2h-1zM15 72h1v2h-1zM16 74h1v2h-1zM17 76h1v2h-1zM18 78h1v2h-1zM19 80h1v2h-1zM20 82h1v2h-1zM21 84h1v2h-1zM22 86h1v2h-1zM43 44h1v2h-1zM42 46h1v2h-1zM41 48h1v2h-1zM40 50h1v2h-1zM39 52h1v2h-1zM38 54h1v2h-1zM37 56h1v2h-1zM36 58h1v2h-1zM35 60h1v2h-1zM34 62h1v2h-1zM33 64h1v2h-1zM34 66h1v2h-1zM35 68h1v2h-1zM36 70h1v2h-1zM37 72h1v2h-1zM38 74h1v2h-1zM39 76h1v2h-1zM40 78h1v2h-1zM41 80h1v2h-1zM42 82h1v2h-1zM43 84h1v2h-1zM44 86h1v2h-1zM65 44h1v2h-1zM64 46h1v2h-1zM63 48h1v2h-1zM62 50h1v2h-1zM61 52h1v2h-1zM60 54h1v2h-1zM59 56h1v2h-1zM58 58h1v2h-1zM57 60h1v2h-1zM56 62h1v2h-1zM55 64h1v2h-1zM56 66h1v2h-1zM57 68h1v2h-1zM58 70h1v2h-1zM59 72h1v2h-1zM60 74h1v2h-1zM61 76h1v2h-1zM62 78h1v2h-1zM63 80h1v2h-1zM64 82h1v2h-1zM65 84h1v2h-1zM66 86h1v2h-1zM87 44h1v2h-1zM86 46h1v2h-1zM85 48h1v2h-1zM84 50h1v2h-1zM83 52h1v2h-1zM82 54h1v2h-1zM81 56h1v2h-1zM80 58h1v2h-1zM79 60h1v2h-1zM78 62h1v2h-1zM77 64h1v2h-1zM78 66h1v2h-1zM79 68h1v2h-1zM80 70h1v2h-1zM81 72h1v2h-1zM82 74h1v2h-1zM83 76h1v2h-1zM84 78h1v2h-1zM85 80h1v2h-1zM86 82h1v2h-1zM87 84h1v2h-1zM88 86h1v2h-1zM109 44h1v2h-1zM108 46h1v2h-1zM107 48h1v2h-1zM106 50h1v2h-1zM105 52h1v2h-1zM104 54h1v2h-1zM103 56h1v2h-1zM102 58h1v2h-1zM101 60h1v2h-1zM100 62h1v2h-1zM99 64h1v2h-1zM100 66h1v2h-1zM101 68h1v2h-1zM102 70h1v2h-1zM103 72h1v2h-1zM104 74h1v2h-1zM105 76h1v2h-1zM106 78h1v2h-1zM107 80h1v2h-1zM108 82h1v2h-1zM109 84h1v2h-1zM110 86h1v2h-1zM131 44h1v2h-1zM130 46h1v2h-1zM129 48h1v2h-1zM128 50h1v2h-1zM127 52h1v2h-1zM126 54h1v2h-1zM125 56h1v2h-1zM124 58h1v2h-1zM123 60h1v2h-1zM122 62h1v2h-1zM121 64h1v2h-1zM122 66h1v2h-1zM123 68h1v2h-1zM124 70h1v2h-1zM125 72h1v2h-1zM126 74h1v2h-1zM127 76h1v2h-1zM128 78h1v2h-1zM129 80h1v2h-1zM130 82h1v2h-1zM131 84h1v2h-1zM132 86h1v2h-1zM153 44h1v2h-1zM152 46h1v2h-1zM151 48h1v2h-1zM150 50h1v2h-1zM149 52h1v2h-1zM148 54h1v2h-1zM147 56h1v2h-1zM146 58h1v2h-1zM145 60h1v2h-1zM144 62h1v2h-1zM143 64h1v2h-1zM144 66h1v2h-1zM145 68h1v2h-1zM146 70h1v2h-1zM147 72h1v2h-1zM148 74h1v2h-1zM149 76h1v2h-1zM150 78h1v2h-1zM151 80h1v2h-1zM152 82h1v2h-1zM153 84h1v2h-1zM154 86h1v2h-1zM175 44h1v2h-1zM174 46h1v2h-1zM173 48h1v2h-1zM172 50h1v2h-1zM171 52h1v2h-1zM170 54h1v2h-1zM169 56h1v2h-1zM168 58h1v2h-1zM167 60h1v2h-1zM166 62h1v2h-1zM165 64h1v2h-1zM166 66h1v2h-1zM167 68h1v2h-1zM168 70h1v2h-1zM169 72h1v2h-1zM170 74h1v2h-1zM171 76h1v2h-1zM172 78h1v2h-1zM173 80h1v2h-1zM174 82h1v2h-1zM175 84h1v2h-1zM176 86h1v2h-1zM197 44h1v2h-1zM196 46h1v2h-1zM195 48h1v2h-1zM194 50h1v2h-1zM193 52h1v2h-1zM192 54h1v2h-1zM191 56h1v2h-1zM190 58h1v2h-1zM189 60h1v2h-1zM188 62h1v2h-1zM187 64h1v2h-1zM188 66h1v2h-1zM189 68h1v2h-1zM190 70h1v2h-1zM191 72h1v2h-1zM192 74h1v2h-1zM193 76h1v2h-1zM194 78h1v2h-1zM195 80h1v2h-1zM196 82h1v2h-1zM197 84h1v2h-1zM198 86h1v2h-1zM219 44h1v2h-1zM218 46h1v2h-1zM217 48h1v2h-1zM216 50h1v2h-1zM215 52h1v2h-1zM214 54h1v2h-1zM213 56h1v2h-1zM212 58h1v2h-1zM211 60h1v2h-1zM210 62h1v2h-1zM209 64h1v2h-1zM210 66h1v2h-1zM211 68h1v2h-1zM212 70h1v2h-1zM213 72h1v2h-1zM214 74h1v2h-1zM215 76h1v2h-1zM216 78h1v2h-1zM217 80h1v2h-1zM218 82h1v2h-1zM219 84h1v2h-1zM220 86h1v2h-1zM241 44h1v2h-1zM240 46h1v2h-1zM239 48h1v2h-1zM238 50h1v2h-1zM237 52h1v2h-1zM236 54h1v2h-1zM235 56h1v2h-1zM234 58h1v2h-1zM233 60h1v2h-1zM232 62h1v2h-1zM231 64h1v2h-1zM232 66h1v2h-1zM233 68h1v2h-1zM234 70h1v2h-1zM235 72h1v2h-1zM236 74h1v2h-1zM237 76h1v2h-1zM238 78h1v2h-1zM239 80h1v2h-1zM240 82h1v2h-1zM241 84h1v2h-1zM242 86h1v2h-1zM21 88h1v2h-1zM20 90h1v2h-1zM19 92h1v2h-1zM18 94h1v2h-1zM17 96h1v2h-1zM16 98h1v2h-1zM15 100h1v2h-1zM14 102h1v2h-1zM13 104h1v2h-1zM12 106h1v2h-1zM11 108h1v2h-1zM12 110h1v2h-1zM13 112h1v2h-1zM14 114h1v2h-1zM15 116h1v2h-1zM16 118h1v2h-1zM17 120h1v2h-1zM18 122h1v2h-1zM19 124h1v2h-1zM20 126h1v2h-1zM21 128h1v2h-1zM22 130h1v2h-1zM43 88h1v2h-1zM42 90h1v2h-1zM41 92h1v2h-1zM40 94h1v2h-1zM39 96h1v2h-1zM38 98h1v2h-1zM37 100h1v2h-1zM36 102h1v2h-1zM35 104h1v2h-1zM34 106h1v2h-1zM33 108h1v2h-1zM34 110h1v2h-1zM35 112h1v2h-1zM36 114h1v2h-1zM37 116h1v2h-1zM38 118h1v2h-1zM39 120h1v2h-1zM40 122h1v2h-1zM41 124h1v2h-1zM42 126h1v2h-1zM43 128h1v2h-1zM44 130h1v2h-1zM65 88h1v2h-1zM64 90h1v2h-1zM63 92h1v2h-1zM62 94h1v2h-1zM61 96h1v2h-1zM60 98h1v2h-1zM59 100h1v2h-1zM58 102h1v2h-1zM57 104h1v2h-1zM56 106h1v2h-1zM55 108h1v2h-1zM56 110h1v2h-1zM57 112h1v2h-1zM58 114h1v2h-1zM59 116h1v2h-1zM60 118h1v2h-1zM61 120h1v2h-1zM62 122h1v2h-1zM63 124h1v2h-1zM64 126h1v2h-1zM65 128h1v2h-1zM66 130h1v2h-1zM87 88h1v2h-1zM86 90h1v2h-1zM85 92h1v2h-1zM84 94h1v2h-1zM83 96h1v2h-1zM82 98h1v2h-1zM81 100h1v2h-1zM80 102h1v2h-1zM79 104h1v2h-1zM78 106h1v2h-1zM77 108h1v2h-1zM78 110h1v2h-1zM79 112h1v2h-1zM80 114h1v2h-1zM81 116h1v2h-1zM82 118h1v2h-1zM83 120h1v2h-1zM84 122h1v2h-1zM85 124h1v2h-1zM86 126h1v2h-1zM87 128h1v2h-1zM88 130h1v2h-1zM109 88h1v2h-1zM108 90h1v2h-1zM107 92h1v2h-1zM106 94h1v2h-1zM105 96h1v2h-1zM104 98h1v2h-1zM103 100h1v2h-1zM102 102h1v2h-1zM101 104h1v2h-1zM100 106h1v2h-1zM99 108h1v2h-1zM100 110h1v2h-1zM101 112h1v2h-1zM102 114h1v2h-1zM103 116h1v2h-1zM104 118h1v2h-1zM105 120h1v2h-1zM106 122h1v2h-1zM107 124h1v2h-1zM108 126h1v2h-1zM109 128h1v2h-1zM110 130h1v2h-1zM131 88h1v2h-1zM130 90h1v2h-1zM129 92h1v2h-1zM128 94h1v2h-1zM127 96h1v2h-1zM126 98h1v2h-1zM125 100h1v2h-1zM124 102h1v2h-1zM123 104h1v2h-1zM122 106h1v2h-1zM121 108h1v2h-1zM122 110h1v2h-1zM123 112h1v2h-1zM124 114h1v2h-1zM125 116h1v2h-1zM126 118h1v2h-1zM127 120h1v2h-1zM128 122h1v2h-1zM129 124h1v2h-1zM130 126h1v2h-1zM131 128h1v2h-1zM132 130h1v2h-1zM153 88h1v2h-1zM152 90h1v2h-1zM151 92h1v2h-1zM150 94h1v2h-1zM149 96h1v2h-1zM148 98h1v2h-1zM147 100h1v2h-1zM146 102h1v2h-1zM145 104h1v2h-1zM144 106h1v2h-1zM143 108h1v2h-1zM144 110h1v2h-1zM145 112h1v2h-1zM146 114h1v2h-1zM147 116h1v2h-1zM148 118h1v2h-1zM149 120h1v2h-1zM150 122h1v2h-1zM151 124h1v2h-1zM152 126h1v2h-1zM153 128h1v2h-1zM154 130h1v2h-1zM175 88h1v2h-1zM174 90h1v2h-1zM173 92h1v2h-1zM172 94h1v2h-1zM171 96h1v2h-1zM170 98h1v2h-1zM169 100h1v2h-1zM168 102h1v2h-1zM167 104h1v2h-1zM166 106h1v2h-1zM165 108h1v2h-1zM166 110h1v2h-1zM167 112h1v2h-1zM168 114h1v2h-1zM169 116h1v2h-1zM170 118h1v2h-1zM171 120h1v2h-1zM172 122h1v2h-1zM173 124h1v2h-1zM174 126h1v2h-1zM175 128h1v2h-1zM176 130h1v2h-1zM197 88h1v2h-1zM196 90h1v2h-1zM195 92h1v2h-1zM194 94h1v2h-1zM193 96h1v2h-1zM192 98h1v2h-1zM191 100h1v2h-1zM190 102h1v2h-1zM189 104h1v2h-1zM188 106h1v2h-1zM187 108h1v2h-1zM188 110h1v2h-1zM189 112h1v2h-1zM190 114h1v2h-1zM191 116h1v2h-1zM192 118h1v2h-1zM193 120h1v2h-1zM194 122h1v2h-1zM195 124h1v2h-1zM196 126h1v2h-1zM197 128h1v2h-1zM198 130h1v2h-1zM219 88h1v2h-1zM218 90h1v2h-1zM217 92h1v2h-1zM216 94h1v2h-1zM215 96h1v2h-1zM214 98h1v2h-1zM213 100h1v2h-1zM212 102h1v2h-1zM211 104h1v2h-1zM210 106h1v2h-1zM209 108h1v2h-1zM210 110h1v2h-1zM211 112h1v2h-1zM212 114h1v2h-1zM213 116h1v2h-1zM214 118h1v2h-1zM215 120h1v2h-1zM216 122h1v2h-1zM217 124h1v2h-1zM218 126h1v2h-1zM219 128h1v2h-1zM220 130h1v2h-1zM241 88h1v2h-1zM240 90h1v2h-1zM239 92h1v2h-1zM238 94h1v2h-1zM237 96h1v2h-1zM236 98h1v2h-1zM235 100h1v2h-1zM234 102h1v2h-1zM233 104h1v2h-1zM232 106h1v2h-1zM231 108h1v2h-1zM232 110h1v2h-1zM233 112h1v2h-1zM234 114h1v2h-1zM235 116h1v2h-1zM236 118h1v2h-1zM237 120h1v2h-1zM238 122h1v2h-1zM239 124h1v2h-1zM240 126h1v2h-1zM241 128h1v2h-1zM242 130h1v2h-1zM21 132h1v2h-1zM20 134h1v2h-1zM19 136h1v2h-1zM18 138h1v2h-1zM17 140h1v2h-1zM16 142h1v2h-1zM15 144h1v2h-1zM14 146h1v2h-1zM13 148h1v2h-1zM12 150h1v2h-1zM11 152h1v2h-1zM12 154h1v2h-1zM13 156h1v2h-1zM14 158h1v2h-1zM15 160h1v2h-1zM16 162h1v2h-1zM17 164h1v2h-1zM18 166h1v2h-1zM19 168h1v2h-1zM20 170h1v2h-1zM21 172h1v2h-1zM22 174h1v2h-1zM43 132h1v2h-1zM42 134h1v2h-1zM41 136h1v2h-1zM40 138h1v2h-1zM39 140h1v2h-1zM38 142h1v2h-1zM37 144h1v2h-1zM36 146h1v2h-1zM35 148h1v2h-1zM34 150h1v2h-1zM33 152h1v2h-1zM34 154h1v2h-1zM35 156h1v2h-1zM36 158h1v2h-1zM37 160h1v2h-1zM38 162h1v2h-1zM39 164h1v2h-1zM40 166h1v2h-1zM41 168h1v2h-1zM42 170h1v2h-1zM43 172h1v2h-1zM44 174h1v2h-1zM65 132h1v2h-1zM64 134h1v2h-1zM63 136h1v2h-1zM62 138h1v2h-1zM61 140h1v2h-1zM60 142h1v2h-1zM59 144h1v2h-1zM58 146h1v2h-1zM57 148h1v2h-1zM56 150h1v2h-1zM55 152h1v2h-1zM56 154h1v2h-1zM57 156h1v2h-1zM58 158h1v2h-1zM59 160h1v2h-1zM60 162h1v2h-1zM61 164h1v2h-1zM62 166h1v2h-1zM63 168h1v2h-1zM64 170h1v2h-1zM65 172h1v2h-1zM66 174h1v2h-1zM87 132h1v2h-1zM86 134h1v2h-1zM85 136h1v2h-1zM84 138h1v2h-1zM83 140h1v2h-1zM82 142h1v2h-1zM81 144h1v2h-1zM80 146h1v2h-1zM79 148h1v2h-1zM78 150h1v2h-1zM77 152h1v2h-1zM78 154h1v2h-1zM79 156h1v2h-1zM80 158h1v2h-1zM81 160h1v2h-1zM82 162h1v2h-1zM83 164h1v2h-1zM84 166h1v2h-1zM85 168h1v2h-1zM86 170h1v2h-1zM87 172h1v2h-1zM88 174h1v2h-1zM109 132h1v2h-1zM108 134h1v2h-1zM107 136h1v2h-1zM106 138h1v2h-1zM105 140h1v2h-1zM104 142h1v2h-1zM103 144h1v2h-1zM102 146h1v2h-1zM101 148h1v2h-1zM100 150h1v2h-1zM99 152h1v2h-1zM100 154h1v2h-1zM101 156h1v2h-1zM102 158h1v2h-1zM103 160h1v2h-1zM104 162h1v2h-1zM105 164h1v2h-1zM106 166h1v2h-1zM107 168h1v2h-1zM108 170h1v2h-1zM109 172h1v2h-1zM110 174h1v2h-1zM131 132h1v2h-1zM130 134h1v2h-1zM129 136h1v2h-1zM128 138h1v2h-1zM127 140h1v2h-1zM126 142h1v2h-1zM125 144h1v2h-1zM124 146h1v2h-1zM123 148h1v2h-1zM122 150h1v2h-1zM121 152h1v2h-1zM122 154h1v2h-1zM123 156h1v2h-1zM124 158h1v2h-1zM125 160h1v2h-1zM126 162h1v2h-1zM127 164h1v2h-1zM128 166h1v2h-1zM129 168h1v2h-1zM130 170h1v2h-1zM131 172h1v2h-1zM132 174h1v2h-1zM153 132h1v2h-1zM152 134h1v2h-1zM151 136h1v2h-1zM150 138h1v2h-1zM149 140h1v2h-1zM148 142h1v2h-1zM147 144h1v2h-1zM146 146h1v2h-1zM145 148h1v2h-1zM144 150h1v2h-1zM143 152h1v2h-1zM144 154h1v2h-1zM145 156h1v2h-1zM146 158h1v2h-1zM147 160h1v2h-1zM148 162h1v2h-1zM149 164h1v2h-1zM150 166h1v2h-1zM151 168h1v2h-1zM152 170h1v2h-1zM153 172h1v2h-1zM154 174h1v2h-1zM175 132h1v2h-1zM174 134h1v2h-1zM173 136h1v2h-1zM172 138h1v2h-1zM171 140h1v2h-1zM170 142h1v2h-1zM169 144h1v2h-1zM168 146h1v2h-1zM167 148h1v2h-1zM166 150h1v2h-1zM165 152h1v2h-1zM166 154h1v2h-1zM167 156h1v2h-1zM168 158h1v2h-1zM169 160h1v2h-1zM170 162h1v2h-1zM171 164h1v2h-1zM172 166h1v2h-1zM173 168h1v2h-1zM174 170h1v2h-1zM175 172h1v2h-1zM176 174h1v2h-1zM197 132h1v2h-1zM196 134h1v2h-1zM195 136h1v2h-1zM194 138h1v2h-1zM193 140h1v2h-1zM192 142h1v2h-1zM191 144h1v2h-1zM190 146h1v2h-1zM189 148h1v2h-1zM188 150h1v2h-1zM187 152h1v2h-1zM188 154h1v2h-1zM189 156h1v2h-1zM190 158h1v2h-1zM191 160h1v2h-1zM192 162h1v2h-1zM193 164h1v2h-1zM194 166h1v2h-1zM195 168h1v2h-1zM196 170h1v2h-1zM197 172h1v2h-1zM198 174h1v2h-1zM219 132h1v2h-1zM218 134h1v2h-1zM217 136h1v2h-1zM216 138h1v2h-1zM215 140h1v2h-1zM214 142h1v2h-1zM213 144h1v2h-1zM212 146h1v2h-1zM211 148h1v2h-1zM210 150h1v2h-1zM209 152h1v2h-1zM210 154h1v2h-1zM211 156h1v2h-1zM212 158h1v2h-1zM213 160h1v2h-1zM214 162h1v2h-1zM215 164h1v2h-1zM216 166h1v2h-1zM217 168h1v2h-1zM218 170h1v2h-1zM219 172h1v2h-1zM220 174h1v2h-1zM241 132h1v2h-1zM240 134h1v2h-1zM239 136h1v2h-1zM238 138h1v2h-1zM237 140h1v2h-1zM236 142h1v2h-1zM235 144h1v2h-1zM234 146h1v2h-1zM233 148h1v2h-1zM232 150h1v2h-1zM231 152h1v2h-1zM232 154h1v2h-1zM233 156h1v2h-1zM234 158h1v2h-1zM235 160h1v2h-1zM236 162h1v2h-1zM237 164h1v2h-1zM238 166h1v2h-1zM239 168h1v2h-1zM240 170h1v2h-1zM241 172h1v2h-1zM242 174h1v2h-1zM21 176h1v2h-1zM20 178h1v2h-1zM19 180h1v2h-1zM18 182h1v2h-1zM17 184h1v2h-1zM16 186h1v2h-1zM15 188h1v2h-1zM14 190h1v2h-1zM13 192h1v2h-1zM12 194h1v2h-1zM11 196h1v2h-1zM12 198h1v2h-1zM13 200h1v2h-1zM14 202h1v2h-1zM15 204h1v2h-1zM16 206h1v2h-1zM17 208h1v2h-1zM18 210h1v2h-1zM19 212h1v2h-1zM20 214h1v2h-1zM21 216h1v2h-1zM22 218h1v2h-1zM43 176h1v2h-1zM42 178h1v2h-1zM41 180h1v2h-1zM40 182h1v2h-1zM39 184h1v2h-1zM38 186h1v2h-1zM37 188h1v2h-1zM36 190h1v2h-1zM35 192h1v2h-1zM34 194h1v2h-1zM33 196h1v2h-1zM34 198h1v2h-1zM35 200h1v2h-1zM36 202h1v2h-1zM37 204h1v2h-1zM38 206h1v2h-1zM39 208h1v2h-1zM40 210h1v2h-1zM41 212h1v2h-1zM42 214h1v2h-1zM43 216h1v2h-1zM44 218h1v2h-1zM65 176h1v2h-1zM64 178h1v2h-1zM63 180h1v2h-1zM62 182h1v2h-1zM61 184h1v2h-1zM60 186h1v2h-1zM59 188h1v2h-1zM58 190h1v2h-1zM57 192h1v2h-1zM56 194h1v2h-1zM55 196h1v2h-1zM56 198h1v2h-1zM57 200h1v2h-1zM58 202h1v2h-1zM59 204h1v2h-1zM60 206h1v2h-1zM61 208h1v2h-1zM62 210h1v2h-1zM63 212h1v2h-1zM64 214h1v2h-1zM65 216h1v2h-1zM66 218h1v2h-1zM87 176h1v2h-1zM86 178h1v2h-1zM85 180h1v2h-1zM84 182h1v2h-1zM83 184h1v2h-1zM82 186h1v2h-1zM81 188h1v2h-1zM80 190h1v2h-1zM79 192h1v2h-1zM78 194h1v2h-1zM77 196h1v2h-1zM78 198h1v2h-1zM79 200h1v2h-1zM80 202h1v2h-1zM81 204h1v2h-1zM82 206h1v2h-1zM83 208h1v2h-1zM84 210h1v2h-1zM85 212h1v2h-1zM86 214h1v2h-1zM87 216h1v2h-1zM88 218h1v2h-1zM109 176h1v2h-1zM108 178h1v2h-1zM107 180h1v2h-1zM106 182h1v2h-1zM105 184h1v2h-1zM104 186h1v2h-1zM103 188h1v2h-1zM102 190h1v2h-1zM101 192h1v2h-1zM100 194h1v2h-1zM99 196h1v2h-1zM100 198h1v2h-1zM101 200h1v2h-1zM102 202h1v2h-1zM103 204h1v2h-1zM104 206h1v2h-1zM105 208h1v2h-1zM106 210h1v2h-1zM107 212h1v2h-1zM108 214h1v2h-1zM109 216h1v2h-1zM110 218h1v2h-1zM131 176h1v2h-1zM130 178h1v2h-1zM129 180h1v2h-1zM128 182h1v2h-1zM127 184h1v2h-1zM126 186h1v2h-1zM125 188h1v2h-1zM124 190h1v2h-1zM123 192h1v2h-1zM122 194h1v2h-1zM121 196h1v2h-1zM122 198h1v2h-1zM123 200h1v2h-1zM124 202h1v2h-1zM125 204h1v2h-1zM126 206h1v2h-1zM127 208h1v2h-1zM128 210h1v2h-1zM129 212h1v2h-1zM130 214h1v2h-1zM131 216h1v2h-1zM132 218h1v2h-1zM153 176h1v2h-1zM152 178h1v2h-1zM151 180h1v2h-1zM150 182h1v2h-1zM149 184h1v2h-1zM148 186h1v2h-1zM147 188h1v2h-1zM146 190h1v2h-1zM145 192h1v2h-1zM144 194h1v2h-1zM143 196h1v2h-1zM144 198h1v2h-1zM145 200h1v2h-1zM146 202h1v2h-1zM147 204h1v2h-1zM148 206h1v2h-1zM149 208h1v2h-1zM150 210h1v2h-1zM151 212h1v2h-1zM152 214h1v2h-1zM153 216h1v2h-1zM154 218h1v2h-1zM175 176h1v2h-1zM174 178h1v2h-1zM173 180h1v2h-1zM172 182h1v2h-1zM171 184h1v2h-1zM170 186h1v2h-1zM169 188h1v2h-1zM168 190h1v2h-1zM167 192h1v2h-1zM166 194h1v2h-1zM165 196h1v2h-1zM166 198h1v2h-1zM167 200h1v2h-1zM168 202h1v2h-1zM169 204h1v2h-1zM170 206h1v2h-1zM171 208h1v2h-1zM172 210h1v2h-1zM173 212h1v2h-1zM174 214h1v2h-1zM175 216h1v2h-1zM176 218h1v2h-1zM197 176h1v2h-1zM196 178h1v2h-1zM195 180h1v2h-1zM194 182h1v2h-1zM193 184h1v2h-1zM192 186h1v2h-1zM191 188h1v2h-1zM190 190h1v2h-1zM189 192h1v2h-1zM188 194h1v2h-1zM187 196h1v2h-1zM188 198h1v2h-1zM189 200h1v2h-1zM190 202h1v2h-1zM191 204h1v2h-1zM192 206h1v2h-1zM193 208h1v2h-1zM194 210h1v2h-1zM195 212h1v2h-1zM196 214h1v2h-1zM197 216h1v2h-1zM198 218h1v2h-1zM219 176h1v2h-1zM218 178h1v2h-1zM217 180h1v2h-1zM216 182h1v2h-1zM215 184h1v2h-1zM214 186h1v2h-1zM213 188h1v2h-1zM212 190h1v2h-1zM211 192h1v2h-1zM210 194h1v2h-1zM209 196h1v2h-1zM210 198h1v2h-1zM211 200h1v2h-1zM212 202h1v2h-1zM213 204h1v2h-1zM214 206h1v2h-1zM215 208h1v2h-1zM216 210h1v2h-1zM217 212h1v2h-1zM218 214h1v2h-1zM219 216h1v2h-1zM220 218h1v2h-1zM241 176h1v2h-1zM240 178h1v2h-1zM239 180h1v2h-1zM238 182h1v2h-1zM237 184h1v2h-1zM236 186h1v2h-1zM235 188h1v2h-1zM234 190h1v2h-1zM233 192h1v2h-1zM232 194h1v2h-1zM231 196h1v2h-1zM232 198h1v2h-1zM233 200h1v2h-1zM234 202h1v2h-1zM235 204h1v2h-1zM236 206h1v2h-1zM237 208h1v2h-1zM238 210h1v2h-1zM239 212h1v2h-1zM240 214h1v2h-1zM241 216h1v2h-1zM242 218h1v2h-1zM21 220h1v2h-1zM20 222h1v2h-1zM19 224h1v2h-1zM18 226h1v2h-1zM17 228h1v2h-1zM16 230h1v2h-1zM15 232h1v2h-1zM14 234h1v2h-1zM13 236h1v2h-1zM12 238h1v2h-1zM11 240h1v2h-1zM12 242h1v2h-1zM13 244h1v2h-1zM14 246h1v2h-1zM15 248h1v2h-1zM16 250h1v2h-1zM17 252h1v2h-1zM18 254h1v2h-1zM19 256h1v2h-1zM20 258h1v2h-1zM21 260h1v2h-1zM22 262h1v2h-1zM43 220h1v2h-1zM42 222h1v2h-1zM41 224h1v2h-1zM40 226h1v2h-1zM39 228h1v2h-1zM38 230h1v2h-1zM37 232h1v2h-1zM36 234h1v2h-1zM35 236h1v2h-1zM34 238h1v2h-1zM33 240h1v2h-1zM34 242h1v2h-1zM35 244h1v2h-1zM36 246h1v2h-1zM37 248h1v2h-1zM38 250h1v2h-1zM39 252h1v2h-1zM40 254h1v2h-1zM41 256h1v2h-1zM42 258h1v2h-1zM43 260h1v2h-1zM44 262h1v2h-1zM65 220h1v2h-1zM64 222h1v2h-1zM63 224h1v2h-1zM62 226h1v2h-1zM61 228h1v2h-1zM60 230h1v2h-1zM59 232h1v2h-1zM58 234h1v2h-1zM57 236h1v2h-1zM56 238h1v2h-1zM55 240h1v2h-1zM56 242h1v2h-1zM57 244h1v2h-1zM58 246h1v2h-1zM59 248h1v2h-1zM60 250h1v2h-1zM61 252h1v2h-1zM62 254h1v2h-1zM63 256h1v2h-1zM64 258h1v2h-1zM65 260h1v2h-1zM66 262h1v2h-1zM87 220h1v2h-1zM86 222h1v2h-1zM85 224h1v2h-1zM84 226h1v2h-1zM83 228h1v2h-1zM82 230h1v2h-1zM81 232h1v2h-1zM80 234h1v2h-1zM79 236h1v2h-1zM78 238h1v2h-1zM77 240h1v2h-1zM78 242h1v2h-1zM79 244h1v2h-1zM80 246h1v2h-1zM81 248h1v2h-1zM82 250h1v2h-1zM83 252h1v2h-1zM84 254h1v2h-1zM85 256h1v2h-1zM86 258h1v2h-1zM87 260h1v2h-1zM88 262h1v2h-1zM109 220h1v2h-1zM108 222h1v2h-1zM107 224h1v2h-1zM106 226h1v2h-1zM105 228h1v2h-1zM104 230h1v2h-1zM103 232h1v2h-1zM102 234h1v2h-1zM101 236h1v2h-1zM100 238h1v2h-1zM99 240h1v2h-1zM100 242h1v2h-1zM101 244h1v2h-1zM102 246h1v2h-1zM103 248h1v2h-1zM104 250h1v2h-1zM105 252h1v2h-1zM106 254h1v2h-1zM107 256h1v2h-1zM108 258h1v2h-1zM109 260h1v2h-1zM110 262h1v2h-1zM131 220h1v2h-1zM130 222h1v2h-1zM129 224h1v2h-1zM128 226h1v2h-1zM127 228h1v2h-1zM126 230h1v2h-1zM125 232h1v2h-1zM124 234h1v2h-1zM123 236h1v2h-1zM122 238h1v2h-1zM121 240h1v2h-1zM122 242h1v2h-1zM123 244h1v2h-1zM124 246h1v2h-1zM125 248h1v2h-1zM126 250h1v2h-1zM127 252h1v2h-1zM128 254h1v2h-1zM129 256h1v2h-1zM130 258h1v2h-1zM131 260h1v2h-1zM132 262h1v2h-1zM153 220h1v2h-1zM152 222h1v2h-1zM151 224h1v2h-1zM150 226h1v2h-1zM149 228h1v2h-1zM148 230h1v2h-1zM147 232h1v2h-1zM146 234h1v2h-1zM145 236h1v2h-1zM144 238h1v2h-1zM143 240h1v2h-1zM144 242h1v2h-1zM145 244h1v2h-1zM146 246h1v2h-1zM147 248h1v2h-1zM148 250h1v2h-1zM149 252h1v2h-1zM150 254h1v2h-1zM151 256h1v2h-1zM152 258h1v2h-1zM153 260h1v2h-1zM154 262h1v2h-1zM175 220h1v2h-1zM174 222h1v2h-1zM173 224h1v2h-1zM172 226h1v2h-1zM171 228h1v2h-1zM170 230h1v2h-1zM169 232h1v2h-1zM168 234h1v2h-1zM167 236h1v2h-1zM166 238h1v2h-1zM165 240h1v2h-1zM166 242h1v2h-1zM167 244h1v2h-1zM168 246h1v2h-1zM169 248h1v2h-1zM170 250h1v2h-1zM171 252h1v2h-1zM172 254h1v2h-1zM173 256h1v2h-1zM174 258h1v2h-1zM175 260h1v2h-1zM176 262h1v2h-1zM197 220h1v2h-1zM196 222h1v2h-1zM195 224h1v2h-1zM194 226h1v2h-1zM193 228h1v2h-1zM192 230h1v2h-1zM191 232h1v2h-1zM190 234h1v2h-1zM189 236h1v2h-1zM188 238h1v2h-1zM187 240h1v2h-1zM188 242h1v2h-1zM189 244h1v2h-1zM190 246h1v2h-1zM191 248h1v2h-1zM192 250h1v2h-1zM193 252h1v2h-1zM194 254h1v2h-1zM195 256h1v2h-1zM196 258h1v2h-1zM197 260h1v2h-1zM198 262h1v2h-1zM219 220h1v2h-1zM218 222h1v2h-1zM217 224h1v2h-1zM216 226h1v2h-1zM215 228h1v2h-1zM214 230h1v2h-1zM213 232h1v2h-1zM212 234h1v2h-1zM211 236h1v2h-1zM210 238h1v2h-1zM209 240h1v2h-1zM210 242h1v2h-1zM211 244h1v2h-1zM212 246h1v2h-1zM213 248h1v2h-1zM214 250h1v2h-1zM215 252h1v2h-1zM216 254h1v2h-1zM217 256h1v2h-1zM218 258h1v2h-1zM219 260h1v2h-1zM220 262h1v2h-1zM241 220h1v2h-1zM240 222h1v2h-1zM239 224h1v2h-1zM238 226h1v2h-1zM237 228h1v2h-1zM236 230h1v2h-1zM235 232h1v2h-1zM234 234h1v2h-1zM233 236h1v2h-1zM232 238h1v2h-1zM231 240h1v2h-1zM232 242h1v2h-1zM233 244h1v2h-1zM234 246h1v2h-1zM235 248h1v2h-1zM236 250h1v2h-1zM237 252h1v2h-1zM238 254h1v2h-1zM239 256h1v2h-1zM240 258h1v2h-1zM241 260h1v2h-1zM242 262h1v2h-1zM21 264h1v2h-1zM20 266h1v2h-1zM19 268h1v2h-1zM18 270h1v2h-1zM17 272h1v2h-1zM16 274h1v2h-1zM15 276h1v2h-1zM14 278h1v2h-1zM13 280h1v2h-1zM12 282h1v2h-1zM11 284h1v2h-1zM12 286h1v2h-1zM13 288h1v2h-1zM14 290h1v2h-1zM15 292h1v2h-1zM16 294h1v2h-1zM17 296h1v2h-1zM18 298h1v2h-1zM19 300h1v2h-1zM20 302h1v2h-1zM21 304h1v2h-1zM22 306h1v2h-1zM43 264h1v2h-1zM42 266h1v2h-1zM41 268h1v2h-1zM40 270h1v2h-1zM39 272h1v2h-1zM38 274h1v2h-1zM37 276h1v2h-1zM36 278h1v2h-1zM35 280h1v2h-1zM34 282h1v2h-1zM33 284h1v2h-1zM34 286h1v2h-1zM35 288h1v2h-1zM36 290h1v2h-1zM37 292h1v2h-1zM38 294h1v2h-1zM39 296h1v2h-1zM40 298h1v2h-1zM41 300h1v2h-1zM42 302h1v2h-1zM43 304h1v2h-1zM44 306h1v2h-1zM65 264h1v2h-1zM64 266h1v2h-1zM63 268h1v2h-1zM62 270h1v2h-1zM61 272h1v2h-1zM60 274h1v2h-1zM59 276h1v2h-1zM58 278h1v2h-1zM57 280h1v2h-1zM56 282h1v2h-1zM55 284h1v2h-1zM56 286h1v2h-1zM57 288h1v2h-1zM58 290h1v2h-1zM59 292h1v2h-1zM60 294h1v2h-1zM61 296h1v2h-1zM62 298h1v2h-1zM63 300h1v2h-1zM64 302h1v2h-1zM65 304h1v2h-1zM66 306h1v2h-1zM87 264h1v2h-1zM86 266h1v2h-1zM85 268h1v2h-1zM84 270h1v2h-1zM83 272h1v2h-1zM82 274h1v2h-1zM81 276h1v2h-1zM80 278h1v2h-1zM79 280h1v2h-1zM78 282h1v2h-1zM77 284h1v2h-1zM78 286h1v2h-1zM79 288h1v2h-1zM80 290h1v2h-1zM81 292h1v2h-1zM82 294h1v2h-1zM83 296h1v2h-1zM84 298h1v2h-1zM85 300h1v2h-1zM86 302h1v2h-1zM87 304h1v2h-1zM88 306h1v2h-1zM109 264h1v2h-1zM108 266h1v2h-1zM107 268h1v2h-1zM106 270h1v2h-1zM105 272h1v2h-1zM104 274h1v2h-1zM103 276h1v2h-1zM102 278h1v2h-1zM101 280h1v2h-1zM100 282h1v2h-1zM99 284h1v2h-1zM100 286h1v2h-1zM101 288h1v2h-1zM102 290h1v2h-1zM103 292h1v2h-1zM104 294h1v2h-1zM105 296h1v2h-1zM106 298h1v2h-1zM107 300h1v2h-1zM108 302h1v2h-1zM109 304h1v2h-1zM110 306h1v2h-1zM131 264h1v2h-1zM130 266h1v2h-1zM129 268h1v2h-1zM128 270h1v2h-1zM127 272h1v2h-1zM126 274h1v2h-1zM125 276h1v2h-1zM124 278h1v2h-1zM123 280h1v2h-1zM122 282h1v2h-1zM121 284h1v2h-1zM122 286h1v2h-1zM123 288h1v2h-1zM124 290h1v2h-1zM125 292h1v2h-1zM126 294h1v2h-1zM127 296h1v2h-1zM128 298h1v2h-1zM129 300h1v2h-1zM130 302h1v2h-1zM131 304h1v2h-1zM132 306h1v2h-1zM153 264h1v2h-1zM152 266h1v2h-1zM151 268h1v2h-1zM150 270h1v2h-1zM149 272h1v2h-1zM148 274h1v2h-1zM147 276h1v2h-1zM146 278h1v2h-1zM145 280h1v2h-1zM144 282h1v2h-1zM143 284h1v2h-1zM144 286h1v2h-1zM145 288h1v2h-1zM146 290h1v2h-1zM147 292h1v2h-1zM148 294h1v2h-1zM149 296h1v2h-1zM150 298h1v2h-1zM151 300h1v2h-1zM152 302h1v2h-1zM153 304h1v2h-1zM154 306h1v2h-1zM175 264h1v2h-1zM174 266h1v2h-1zM173 268h1v2h-1zM172 270h1v2h-1zM171 272h1v2h-1zM170 274h1v2h-1zM169 276h1v2h-1zM168 278h1v2h-1zM167 280h1v2h-1zM166 282h1v2h-1zM165 284h1v2h-1zM166 286h1v2h-1zM167 288h1v2h-1zM168 290h1v2h-1zM169 292h1v2h-1zM170 294h1v2h-1zM171 296h1v2h-1zM172 298h1v2h-1zM173 300h1v2h-1zM174 302h1v2h-1zM175 304h1v2h-1zM176 306h1v2h-1zM197 264h1v2h-1zM196 266h1v2h-1zM195 268h1v2h-1zM194 270h1v2h-1zM193 272h1v2h-1zM192 274h1v2h-1zM191 276h1v2h-1zM190 278h1v2h-1zM189 280h1v2h-1zM188 282h1v2h-1zM187 284h1v2h-1zM188 286h1v2h-1zM189 288h1v2h-1zM190 290h1v2h-1zM191 292h1v2h-1zM192 294h1v2h-1zM193 296h1v2h-1zM194 298h1v2h-1zM195 300h1v2h-1zM196 302h1v2h-1zM197 304h1v2h-1zM198 306h1v2h-1zM219 264h1v2h-1zM218 266h1v2h-1zM217 268h1v2h-1zM216 270h1v2h-1zM215 272h1v2h-1zM214 274h1v2h-1zM213 276h1v2h-1zM212 278h1v2h-1zM211 280h1v2h-1zM210 282h1v2h-1zM209 284h1v2h-1zM210 286h1v2h-1zM211 288h1v2h-1zM212 290h1v2h-1zM213 292h1v2h-1zM214 294h1v2h-1zM215 296h1v2h-1zM216 298h1v2h-1zM217 300h1v2h-1zM218 302h1v2h-1zM219 304h1v2h-1zM220 306h1v2h-1zM241 264h1v2h-1zM240 266h1v2h-1zM239 268h1v2h-1zM238 270h1v2h-1zM237 272h1v2h-1zM236 274h1v2h-1zM235 276h1v2h-1zM234 278h1v2h-1zM233 280h1v2h-1zM232 282h1v2h-1zM231 284h1v2h-1zM232 286h1v2h-1zM233 288h1v2h-1zM234 290h1v2h-1zM235 292h1v2h-1zM236 294h1v2h-1zM237 296h1v2h-1zM238 298h1v2h-1zM239 300h1v2h-1zM240 302h1v2h-1zM241 304h1v2h-1zM242 306h1v2h-1zM21 308h1v2h-1zM20 310h1v2h-1zM19 312h1v2h-1zM18 314h1v2h-1zM17 316h1v2h-1zM16 318h1v2h-1zM15 320h1v2h-1zM14 322h1v2h-1zM13 324h1v2h-1zM12 326h1v2h-1zM11 328h1v2h-1zM12 330h1v2h-1zM13 332h1v2h-1zM14 334h1v2h-1zM15 336h1v2h-1zM16 338h1v2h-1zM17 340h1v2h-1zM18 342h1v2h-1zM19 344h1v2h-1zM20 346h1v2h-1zM21 348h1v2h-1zM22 350h1v2h-1zM43 308h1v2h-1zM42 310h1v2h-1zM41 312h1v2h-1zM40 314h1v2h-1zM39 316h1v2h-1zM38 318h1v2h-1zM37 320h1v2h-1zM36 322h1v2h-1zM35 324h1v2h-1zM34 326h1v2h-1zM33 328h1v2h-1zM34 330h1v2h-1zM35 332h1v2h-1zM36 334h1v2h-1zM37 336h1v2h-1zM38 338h1v2h-1zM39 340h1v2h-1zM40 342h1v2h-1zM41 344h1v2h-1zM42 346h1v2h-1zM43 348h1v2h-1zM44 350h1v2h-1zM65 308h1v2h-1zM64 310h1v2h-1zM63 312h1v2h-1zM62 314h1v2h-1zM61 316h1v2h-1zM60 318h1v2h-1zM59 320h1v2h-1zM58 322h1v2h-1zM57 324h1v2h-1zM56 326h1v2h-1zM55 328h1v2h-1zM56 330h1v2h-1zM57 332h1v2h-1zM58 334h1v2h-1zM59 336h1v2h-1zM60 338h1v2h-1zM61 340h1v2h-1zM62 342h1v2h-1zM63 344h1v2h-1zM64 346h1v2h-1zM65 348h1v2h-1zM66 350h1v2h-1zM87 308h1v2h-1zM86 310h1v2h-1zM85 312h1v2h-1zM84 314h1v2h-1zM83 316h1v2h-1zM82 318h1v2h-1zM81 320h1v2h-1zM80 322h1v2h-1zM79 324h1v2h-1zM78 326h1v2h-1zM77 328h1v2h-1zM78 330h1v2h-1zM79 332h1v2h-1zM80 334h1v2h-1zM81 336h1v2h-1zM82 338h1v2h-1zM83 340h1v2h-1zM84 342h1v2h-1zM85 344h1v2h-1zM86 346h1v2h-1zM87 348h1v2h-1zM88 350h1v2h-1zM109 308h1v2h-1zM108 310h1v2h-1zM107 312h1v2h-1zM106 314h1v2h-1zM105 316h1v2h-1zM104 318h1v2h-1zM103 320h1v2h-1zM102 322h1v2h-1zM101 324h1v2h-1zM100 326h1v2h-1zM99 328h1v2h-1zM100 330h1v2h-1zM101 332h1v2h-1zM102 334h1v2h-1zM103 336h1v2h-1zM104 338h1v2h-1zM105 340h1v2h-1zM106 342h1v2h-1zM107 344h1v2h-1zM108 346h1v2h-1zM109 348h1v2h-1zM110 350h1v2h-1zM131 308h1v2h-1zM130 310h1v2h-1zM129 312h1v2h-1zM128 314h1v2h-1zM127 316h1v2h-1zM126 318h1v2h-1zM125 320h1v2h-1zM124 322h1v2h-1zM123 324h1v2h-1zM122 326h1v2h-1zM121 328h1v2h-1zM122 330h1v2h-1zM123 332h1v2h-1zM124 334h1v2h-1zM125 336h1v2h-1zM126 338h1v2h-1zM127 340h1v2h-1zM128 342h1v2h-1zM129 344h1v2h-1zM130 346h1v2h-1zM131 348h1v2h-1zM132 350h1v2h-1zM153 308h1v2h-1zM152 310h1v2h-1zM151 312h1v2h-1zM150 314h1v2h-1zM149 316h1v2h-1zM148 318h1v2h-1zM147 320h1v2h-1zM146 322h1v2h-1zM145 324h1v2h-1zM144 326h1v2h-1zM143 328h1v2h-1zM144 330h1v2h-1zM145 332h1v2h-1zM146 334h1v2h-1zM147 336h1v2h-1zM148 338h1v2h-1zM149 340h1v2h-1zM150 342h1v2h-1zM151 344h1v2h-1zM152 346h1v2h-1zM153 348h1v2h-1zM154 350h1v2h-1zM175 308h1v2h-1zM174 310h1v2h-1zM173 312h1v2h-1zM172 314h1v2h-1zM171 316h1v2h-1zM170 318h1v2h-1zM169 320h1v2h-1zM168 322h1v2h-1zM167 324h1v2h-1zM166 326h1v2h-1zM165 328h1v2h-1zM166 330h1v2h-1zM167 332h1v2h-1zM168 334h1v2h-1zM169 336h1v2h-1zM170 338h1v2h-1zM171 340h1v2h-1zM172 342h1v2h-1zM173 344h1v2h-1zM174 346h1v2h-1zM175 348h1v2h-1zM176 350h1v2h-1zM197 308h1v2h-1zM196 310h1v2h-1zM195 312h1v2h-1zM194 314h1v2h-1zM193 316h1v2h-1zM192 318h1v2h-1zM191 320h1v2h-1zM190 322h1v2h-1zM189 324h1v2h-1zM188 326h1v2h-1zM187 328h1v2h-1zM188 330h1v2h-1zM189 332h1v2h-1zM190 334h1v2h-1zM191 336h1v2h-1zM192 338h1v2h-1zM193 340h1v2h-1zM194 342h1v2h-1zM195 344h1v2h-1zM196 346h1v2h-1zM197 348h1v2h-1zM198 350h1v2h-1zM219 308h1v2h-1zM218 310h1v2h-1zM217 312h1v2h-1zM216 314h1v2h-1zM215 316h1v2h-1zM214 318h1v2h-1zM213 320h1v2h-1zM212 322h1v2h-1zM211 324h1v2h-1zM210 326h1v2h-1zM209 328h1v2h-1zM210 330h1v2h-1zM211 332h1v2h-1zM212 334h1v2h-1zM213 336h1v2h-1zM214 338h1v2h-1zM215 340h1v2h-1zM216 342h1v2h-1zM217 344h1v2h-1zM218 346h1v2h-1zM219 348h1v2h-1zM220 350h1v2h-1zM241 308h1v2h-1zM240 310h1v2h-1zM239 312h1v2h-1zM238 314h1v2h-1zM237 316h1v2h-1zM236 318h1v2h-1zM235 320h1v2h-1zM234 322h1v2h-1zM233 324h1v2h-1zM232 326h1v2h-1zM231 328h1v2h-1zM232 330h1v2h-1zM233 332h1v2h-1zM234 334h1v2h-1zM235 336h1v2h-1zM236 338h1v2h-1zM237 340h1v2h-1zM238 342h1v2h-1zM239 344h1v2h-1zM240 346h1v2h-1zM241 348h1v2h-1zM242 350h1v2h-1zM21 352h1v2h-1zM20 354h1v2h-1zM19 356h1v2h-1zM18 358h1v2h-1zM17 360h1v2h-1zM16 362h1v2h-1zM15 364h1v2h-1zM14 366h1v2h-1zM13 368h1v2h-1zM12 370h1v2h-1zM11 372h1v2h-1zM12 374h1v2h-1zM13 376h1v2h-1zM14 378h1v2h-1zM15 380h1v2h-1zM16 382h1v2h-1zM17 384h1v2h-1zM18 386h1v2h-1zM19 388h1v2h-1zM20 390h1v2h-1zM21 392h1v2h-1zM22 394h1v2h-1zM43 352h1v2h-1zM42 354h1v2h-1zM41 356h1v2h-1zM40 358h1v2h-1zM39 360h1v2h-1zM38 362h1v2h-1zM37 364h1v2h-1zM36 366h1v2h-1zM35 368h1v2h-1zM34 370h1v2h-1zM33 372h1v2h-1zM34 374h1v2h-1zM35 376h1v2h-1zM36 378h1v2h-1zM37 380h1v2h-1zM38 382h1v2h-1zM39 384h1v2h-1zM40 386h1v2h-1zM41 388h1v2h-1zM42 390h1v2h-1zM43 392h1v2h-1zM44 394h1v2h-1zM65 352h1v2h-1zM64 354h1v2h-1zM63 356h1v2h-1zM62 358h1v2h-1zM61 360h1v2h-1zM60 362h1v2h-1zM59 364h1v2h-1zM58 366h1v2h-1zM57 368h1v2h-1zM56 370h1v2h-1zM55 372h1v2h-1zM56 374h1v2h-1zM57 376h1v2h-1zM58 378h1v2h-1zM59 380h1v2h-1zM60 382h1v2h-1zM61 384h1v2h-1zM62 386h1v2h-1zM63 388h1v2h-1zM64 390h1v2h-1zM65 392h1v2h-1zM66 394h1v2h-1zM87 352h1v2h-1zM86 354h1v2h-1zM85 356h1v2h-1zM84 358h1v2h-1zM83 360h1v2h-1zM82 362h1v2h-1zM81 364h1v2h-1zM80 366h1v2h-1zM79 368h1v2h-1zM78 370h1v2h-1zM77 372h1v2h-1zM78 374h1v2h-1zM79 376h1v2h-1zM80 378h1v2h-1zM81 380h1v2h-1zM82 382h1v2h-1zM83 384h1v2h-1zM84 386h1v2h-1zM85 388h1v2h-1zM86 390h1v2h-1zM87 392h1v2h-1zM88 394h1v2h-1zM109 352h1v2h-1zM108 354h1v2h-1zM107 356h1v2h-1zM106 358h1v2h-1zM105 360h1v2h-1zM104 362h1v2h-1zM103 364h1v2h-1zM102 366h1v2h-1zM101 368h1v2h-1zM100 370h1v2h-1zM99 372h1v2h-1zM100 374h1v2h-1zM101 376h1v2h-1zM102 378h1v2h-1zM103 380h1v2h-1zM104 382h1v2h-1zM105 384h1v2h-1zM106 386h1v2h-1zM107 388h1v2h-1zM108 390h1v2h-1zM109 392h1v2h-1zM110 394h1v2h-1zM131 352h1v2h-1zM130 354h1v2h-1zM129 356h1v2h-1zM128 358h1v2h-1zM127 360h1v2h-1zM126 362h1v2h-1zM125 364h1v2h-1zM124 366h1v2h-1zM123 368h1v2h-1zM122 370h1v2h-1zM121 372h1v2h-1zM122 374h1v2h-1zM123 376h1v2h-1zM124 378h1v2h-1zM125 380h1v2h-1zM126 382h1v2h-1zM127 384h1v2h-1zM128 386h1v2h-1zM129 388h1v2h-1zM130 390h1v2h-1zM131 392h1v2h-1zM132 394h1v2h-1zM153 352h1v2h-1zM152 354h1v2h-1zM151 356h1v2h-1zM150 358h1v2h-1zM149 360h1v2h-1zM148 362h1v2h-1zM147 364h1v2h-1zM146 366h1v2h-1zM145 368h1v2h-1zM144 370h1v2h-1zM143 372h1v2h-1zM144 374h1v2h-1zM145 376h1v2h-1zM146 378h1v2h-1zM147 380h1v2h-1zM148 382h1v2h-1zM149 384h1v2h-1zM150 386h1v2h-1zM151 388h1v2h-1zM152 390h1v2h-1zM153 392h1v2h-1zM154 394h1v2h-1zM175 352h1v2h-1zM174 354h1v2h-1zM173 356h1v2h-1zM172 358h1v2h-1zM171 360h1v2h-1zM170 362h1v2h-1zM169 364h1v2h-1zM168 366h1v2h-1zM167 368h1v2h-1zM166 370h1v2h-1zM165 372h1v2h-1zM166 374h1v2h-1zM167 376h1v2h-1zM168 378h1v2h-1zM169 380h1v2h-1zM170 382h1v2h-1zM171 384h1v2h-1zM172 386h1v2h-1zM173 388h1v2h-1zM174 390h1v2h-1zM175 392h1v2h-1zM176 394h1v2h-1zM197 352h1v2h-1zM196 354h1v2h-1zM195 356h1v2h-1zM194 358h1v2h-1zM193 360h1v2h-1zM192 362h1v2h-1zM191 364h1v2h-1zM190 366h1v2h-1zM189 368h1v2h-1zM188 370h1v2h-1zM187 372h1v2h-1zM188 374h1v2h-1zM189 376h1v2h-1zM190 378h1v2h-1zM191 380h1v2h-1zM192 382h1v2h-1zM193 384h1v2h-1zM194 386h1v2h-1zM195 388h1v2h-1zM196 390h1v2h-1zM197 392h1v2h-1zM198 394h1v2h-1zM219 352h1v2h-1zM218 354h1v2h-1zM217 356h1v2h-1zM216 358h1v2h-1zM215 360h1v2h-1zM214 362h1v2h-1zM213 364h1v2h-1zM212 366h1v2h-1zM211 368h1v2h-1zM210 370h1v2h-1zM209 372h1v2h-1zM210 374h1v2h-1zM211 376h1v2h-1zM212 378h1v2h-1zM213 380h1v2h-1zM214 382h1v2h-1zM215 384h1v2h-1zM216 386h1v2h-1zM217 388h1v2h-1zM218 390h1v2h-1zM219 392h1v2h-1zM220 394h1v2h-1zM241 352h1v2h-1zM240 354h1v2h-1zM239 356h1v2h-1zM238 358h1v2h-1zM237 360h1v2h-1zM236 362h1v2h-1zM235 364h1v2h-1zM234 366h1v2h-1zM233 368h1v2h-1zM232 370h1v2h-1zM231 372h1v2h-1zM232 374h1v2h-1zM233 376h1v2h-1zM234 378h1v2h-1zM235 380h1v2h-1zM236 382h1v2h-1zM237 384h1v2h-1zM238 386h1v2h-1zM239 388h1v2h-1zM240 390h1v2h-1zM241 392h1v2h-1zM242 394h1v2h-1zM21 396h1v2h-1zM20 398h1v2h-1zM19 400h1v2h-1zM18 402h1v2h-1zM17 404h1v2h-1zM16 406h1v2h-1zM15 408h1v2h-1zM14 410h1v2h-1zM13 412h1v2h-1zM12 414h1v2h-1zM11 416h1v2h-1zM12 418h1v2h-1zM13 420h1v2h-1zM14 422h1v2h-1zM15 424h1v2h-1zM16 426h1v2h-1zM17 428h1v2h-1zM18 430h1v2h-1zM19 432h1v2h-1zM20 434h1v2h-1zM21 436h1v2h-1zM22 438h1v2h-1zM43 396h1v2h-1zM42 398h1v2h-1zM41 400h1v2h-1zM40 402h1v2h-1zM39 404h1v2h-1zM38 406h1v2h-1zM37 408h1v2h-1zM36 410h1v2h-1zM35 412h1v2h-1zM34 414h1v2h-1zM33 416h1v2h-1zM34 418h1v2h-1zM35 420h1v2h-1zM36 422h1v2h-1zM37 424h1v2h-1zM38 426h1v2h-1zM39 428h1v2h-1zM40 430h1v2h-1zM41 432h1v2h-1zM42 434h1v2h-1zM43 436h1v2h-1zM44 438h1v2h-1zM65 396h1v2h-1zM64 398h1v2h-1zM63 400h1v2h-1zM62 402h1v2h-1zM61 404h1v2h-1zM60 406h1v2h-1zM59 408h1v2h-1zM58 410h1v2h-1zM57 412h1v2h-1zM56 414h1v2h-1zM55 416h1v2h-1zM56 418h1v2h-1zM57 420h1v2h-1zM58 422h1v2h-1zM59 424h1v2h-1zM60 426h1v2h-1zM61 428h1v2h-1zM62 430h1v2h-1zM63 432h1v2h-1zM64 434h1v2h-1zM65 436h1v2h-1zM66 438h1v2h-1zM87 396h1v2h-1zM86 398h1v2h-1zM85 400h1v2h-1zM84 402h1v2h-1zM83 404h1v2h-1zM82 406h1v2h-1zM81 408h1v2h-1zM80 410h1v2h-1zM79 412h1v2h-1zM78 414h1v2h-1zM77 416h1v2h-1zM78 418h1v2h-1zM79 420h1v2h-1zM80 422h1v2h-1zM81 424h1v2h-1zM82 426h1v2h-1zM83 428h1v2h-1zM84 430h1v2h-1zM85 432h1v2h-1zM86 434h1v2h-1zM87 436h1v2h-1zM88 438h1v2h-1zM109 396h1v2h-1zM108 398h1v2h-1zM107 400h1v2h-1zM106 402h1v2h-1zM105 404h1v2h-1zM104 406h1v2h-1zM103 408h1v2h-1zM102 410h1v2h-1zM101 412h1v2h-1zM100 414h1v2h-1zM99 416h1v2h-1zM100 418h1v2h-1zM101 420h1v2h-1zM102 422h1v2h-1zM103 424h1v2h-1zM104 426h1v2h-1zM105 428h1v2h-1zM106 430h1v2h-1zM107 432h1v2h-1zM108 434h1v2h-1zM109 436h1v2h-1zM110 438h1v2h-1zM131 396h1v2h-1zM130 398h1v2h-1zM129 400h1v2h-1zM128 402h1v2h-1zM127 404h1v2h-1zM126 406h1v2h-1zM125 408h1v2h-1zM124 410h1v2h-1zM123 412h1v2h-1zM122 414h1v2h-1zM121 416h1v2h-1zM122 418h1v2h-1zM123 420h1v2h-1zM124 422h1v2h-1zM125 424h1v2h-1zM126 426h1v2h-1zM127 428h1v2h-1zM128 430h1v2h-1zM129 432h1v2h-1zM130 434h1v2h-1zM131 436h1v2h-1zM132 438h1v2h-1zM153 396h1v2h-1zM152 398h1v2h-1zM151 400h1v2h-1zM150 402h1v2h-1zM149 404h1v2h-1zM148 406h1v2h-1zM147 408h1v2h-1zM146 410h1v2h-1zM145 412h1v2h-1zM144 414h1v2h-1zM143 416h1v2h-1zM144 418h1v2h-1zM145 420h1v2h-1zM146 422h1v2h-1zM147 424h1v2h-1zM148 426h1v2h-1zM149 428h1v2h-1zM150 430h1v2h-1zM151 432h1v2h-1zM152 434h1v2h-1zM153 436h1v2h-1zM154 438h1v2h-1zM175 396h1v2h-1zM174 398h1v2h-1zM173 400h1v2h-1zM172 402h1v2h-1zM171 404h1v2h-1zM170 406h1v2h-1zM169 408h1v2h-1zM168 410h1v2h-1zM167 412h1v2h-1zM166 414h1v2h-1zM165 416h1v2h-1zM166 418h1v2h-1zM167 420h1v2h-1zM168 422h1v2h-1zM169 424h1v2h-1zM170 426h1v2h-1zM171 428h1v2h-1zM172 430h1v2h-1zM173 432h1v2h-1zM174 434h1v2h-1zM175 436h1v2h-1zM176 438h1v2h-1zM197 396h1v2h-1zM196 398h1v2h-1zM195 400h1v2h-1zM194 402h1v2h-1zM193 404h1v2h-1zM192 406h1v2h-1zM191 408h1v2h-1zM190 410h1v2h-1zM189 412h1v2h-1zM188 414h1v2h-1zM187 416h1v2h-1zM188 418h1v2h-1zM189 420h1v2h-1zM190 422h1v2h-1zM191 424h1v2h-1zM192 426h1v2h-1zM193 428h1v2h-1zM194 430h1v2h-1zM195 432h1v2h-1zM196 434h1v2h-1zM197 436h1v2h-1zM198 438h1v2h-1zM219 396h1v2h-1zM218 398h1v2h-1zM217 400h1v2h-1zM216 402h1v2h-1zM215 404h1v2h-1zM214 406h1v2h-1zM213 408h1v2h-1zM212 410h1v2h-1zM211 412h1v2h-1zM210 414h1v2h-1zM209 416h1v2h-1zM210 418h1v2h-1zM211 420h1v2h-1zM212 422h1v2h-1zM213 424h1v2h-1zM214 426h1v2h-1zM215 428h1v2h-1zM216 430h1v2h-1zM217 432h1v2h-1zM218 434h1v2h-1zM219 436h1v2h-1zM220 438h1v2h-1zM241 396h1v2h-1zM240 398h1v2h-1zM239 400h1v2h-1zM238 402h1v2h-1zM237 404h1v2h-1zM236 406h1v2h-1zM235 408h1v2h-1zM234 410h1v2h-1zM233 412h1v2h-1zM232 414h1v2h-1zM231 416h1v2h-1zM232 418h1v2h-1zM233 420h1v2h-1zM234 422h1v2h-1zM235 424h1v2h-1zM236 426h1v2h-1zM237 428h1v2h-1zM238 430h1v2h-1zM239 432h1v2h-1zM240 434h1v2h-1zM241 436h1v2h-1zM242 438h1v2h-1zM21 440h1v2h-1zM20 442h1v2h-1zM19 444h1v2h-1zM18 446h1v2h-1zM17 448h1v2h-1zM16 450h1v2h-1zM15 452h1v2h-1zM14 454h1v2h-1zM13 456h1v2h-1zM12 458h1v2h-1zM11 460h1v2h-1zM12 462h1v2h-1zM13 464h1v2h-1zM14 466h1v2h-1zM15 468h1v2h-1zM16 470h1v2h-1zM17 472h1v2h-1zM18 474h1v2h-1zM19 476h1v2h-1zM20 478h1v2h-1zM21 480h1v2h-1zM22 482h1v2h-1zM43 440h1v2h-1zM42 442h1v2h-1zM41 444h1v2h-1zM40 446h1v2h-1zM39 448h1v2h-1zM38 450h1v2h-1zM37 452h1v2h-1zM36 454h1v2h-1zM35 456h1v2h-1zM34 458h1v2h-1zM33 460h1v2h-1zM34 462h1v2h-1zM35 464h1v2h-1zM36 466h1v2h-1zM37 468h1v2h-1zM38 470h1v2h-1zM39 472h1v2h-1zM40 474h1v2h-1zM41 476h1v2h-1zM42 478h1v2h-1zM43 480h1v2h-1zM44 482h1v2h-1zM65 440h1v2h-1zM64 442h1v2h-1zM63 444h1v2h-1zM62 446h1v2h-1zM61 448h1v2h-1zM60 450h1v2h-1zM59 452h1v2h-1zM58 454h1v2h-1zM57 456h1v2h-1zM56 458h1v2h-1zM55 460h1v2h-1zM56 462h1v2h-1zM57 464h1v2h-1zM58 466h1v2h-1zM59 468h1v2h-1zM60 470h1v2h-1zM61 472h1v2h-1zM62 474h1v2h-1zM63 476h1v2h-1zM64 478h1v2h-1zM65 480h1v2h-1zM66 482h1v2h-1zM87 440h1v2h-1zM86 442h1v2h-1zM85 444h1v2h-1zM84 446h1v2h-1zM83 448h1v2h-1zM82 450h1v2h-1zM81 452h1v2h-1zM80 454h1v2h-1zM79 456h1v2h-1zM78 458h1v2h-1zM77 460h1v2h-1zM78 462h1v2h-1zM79 464h1v2h-1zM80 466h1v2h-1zM81 468h1v2h-1zM82 470h1v2h-1zM83 472h1v2h-1zM84 474h1v2h-1zM85 476h1v2h-1zM86 478h1v2h-1zM87 480h1v2h-1zM88 482h1v2h-1zM109 440h1v2h-1zM108 442h1v2h-1zM107 444h1v2h-1zM106 446h1v2h-1zM105 448h1v2h-1zM104 450h1v2h-1zM103 452h1v2h-1zM102 454h1v2h-1zM101 456h1v2h-1zM100 458h1v2h-1zM99 460h1v2h-1zM100 462h1v2h-1zM101 464h1v2h-1zM102 466h1v2h-1zM103 468h1v2h-1zM104 470h1v2h-1zM105 472h1v2h-1zM106 474h1v2h-1zM107 476h1v2h-1zM108 478h1v2h-1zM109 480h1v2h-1zM110 482h1v2h-1zM131 440h1v2h-1zM130 442h1v2h-1zM129 444h1v2h-1zM128 446h1v2h-1zM127 448h1v2h-1zM126 450h1v2h-1zM125 452h1v2h-1zM124 454h1v2h-1zM123 456h1v2h-1zM122 458h1v2h-1zM121 460h1v2h-1zM122 462h1v2h-1zM123 464h1v2h-1zM124 466h1v2h-1zM125 468h1v2h-1zM126 470h1v2h-1zM127 472h1v2h-1zM128 474h1v2h-1zM129 476h1v2h-1zM130 478h1v2h-1zM131 480h1v2h-1zM132 482h1v2h-1zM153 440h1v2h-1zM152 442h1v2h-1zM151 444h1v2h-1zM150 446h1v2h-1zM149 448h1v2h-1zM148 450h1v2h-1zM147 452h1v2h-1zM146 454h1v2h-1zM145 456h1v2h-1zM144 458h1v2h-1zM143 460h1v2h-1zM144 462h1v2h-1zM145 464h1v2h-1zM146 466h1v2h-1zM147 468h1v2h-1zM148 470h1v2h-1zM149 472h1v2h-1zM150 474h1v2h-1zM151 476h1v2h-1zM152 478h1v2h-1zM153 480h1v2h-1zM154 482h1v2h-1zM175 440h1v2h-1zM174 442h1v2h-1zM173 444h1v2h-1zM172 446h1v2h-1zM171 448h1v2h-1zM170 450h1v2h-1zM169 452h1v2h-1zM168 454h1v2h-1zM167 456h1v2h-1zM166 458h1v2h-1zM165 460h1v2h-1zM166 462h1v2h-1zM167 464h1v2h-1zM168 466h1v2h-1zM169 468h1v2h-1zM170 470h1v2h-1zM171 472h1v2h-1zM172 474h1v2h-1zM173 476h1v2h-1zM174 478h1v2h-1zM175 480h1v2h-1zM176 482h1v2h-1zM197 440h1v2h-1zM196 442h1v2h-1zM195 444h1v2h-1zM194 446h1v2h-1zM193 448h1v2h-1zM192 450h1v2h-1zM191 452h1v2h-1zM190 454h1v2h-1zM189 456h1v2h-1zM188 458h1v2h-1zM187 460h1v2h-1zM188 462h1v2h-1zM189 464h1v2h-1zM190 466h1v2h-1zM191 468h1v2h-1zM192 470h1v2h-1zM193 472h1v2h-1zM194 474h1v2h-1zM195 476h1v2h-1zM196 478h1v2h-1zM197 480h1v2h-1zM198 482h1v2h-1zM219 440h1v2h-1zM218 442h1v2h-1zM217 444h1v2h-1zM216 446h1v2h-1zM215 448h1v2h-1zM214 450h1v2h-1zM213 452h1v2h-1zM212 454h1v2h-1zM211 456h1v2h-1zM210 458h1v2h-1zM209 460h1v2h-1zM210 462h1v2h-1zM211 464h1v2h-1zM212 466h1v2h-1zM213 468h1v2h-1zM214 470h1v2h-1zM215 472h1v2h-1zM216 474h1v2h-1zM217 476h1v2h-1zM218 478h1v2h-1zM219 480h1v2h-1zM220 482h1v2h-1zM241 440h1v2h-1zM240 442h1v2h-1zM239 444h1v2h-1zM238 446h1v2h-1zM237 448h1v2h-1zM236 450h1v2h-1zM235 452h1v2h-1zM234 454h1v2h-1zM233 456h1v2h-1zM232 458h1v2h-1zM231 460h1v2h-1zM232 462h1v2h-1zM233 464h1v2h-1zM234 466h1v2h-1zM235 468h1v2h-1zM236 470h1v2h-1zM237 472h1v2h-1zM238 474h1v2h-1zM239 476h1v2h-1zM240 478h1v2h-1zM241 480h1v2h-1zM242 482h1v2h-1z"/></svg>
<div style="position:absolute;left:812px;top:45px"><svg width="37" height="50" style="display:block"><rect x="0" y="0" width="37" height="50" fill="#FF0000"/><polygon points="18.5,0.5 36.5,25 18.5,49.5 0.5,25" fill="#D9D9D9" stroke="#3A3A3A" stroke-width="0.7"/><line x1="0" y1="0" x2="37" y2="50" stroke="#9A9A9A" stroke-width="2.8"/><line x1="37" y1="0" x2="0" y2="50" stroke="#9A9A9A" stroke-width="2.8"/><line x1="0" y1="0" x2="37" y2="50" stroke="#E2E2E2" stroke-width="1.1"/><line x1="37" y1="0" x2="0" y2="50" stroke="#E2E2E2" stroke-width="1.1"/><rect x="0.5" y="0.5" width="36" height="49" fill="none" stroke="#1A1A1A" stroke-width="1"/></svg></div>
<div class="snk" style="left:865px;top:38px;width:24px;height:28px"><div class="snk2" style="width:22px;height:26px"><div style="position:absolute;left:0;top:0;width:22px;height:26px;background:#fff"><div style="position:absolute;left:0;top:12px;width:22px;height:1px;background:#000"></div><svg style="position:absolute;left:3px;top:13px" width="11" height="12" shape-rendering="crispEdges"><path fill="#000" d="M0 0h11v1h-11zM1 1h4v1h-4zM6 1h4v1h-4zM1 2h2v1h-2zM8 2h2v1h-2zM0 3h2v1h-2zM9 3h2v1h-2zM0 4h2v1h-2zM9 4h2v1h-2zM0 5h2v1h-2zM9 5h2v1h-2zM0 6h2v1h-2zM9 6h2v1h-2zM1 7h2v1h-2zM8 7h2v1h-2zM1 8h2v1h-2zM8 8h2v1h-2zM2 9h2v1h-2zM7 9h2v1h-2zM3 10h5v1h-5zM4 11h3v1h-3z"/></svg></div></div></div>
<div style="position:absolute;left:924px;top:45px"><svg width="37" height="50" style="display:block"><rect x="0" y="0" width="18.5" height="50" fill="#F0F0F0"/><rect x="18.5" y="0" width="18.5" height="50" fill="#D0D0D0"/><polygon points="18.5,0.5 36.5,25 18.5,49.5 0.5,25" fill="#FF0000" stroke="#202020" stroke-width="0.8"/><line x1="0" y1="0" x2="37" y2="50" stroke="#9A9A9A" stroke-width="3.0"/><line x1="37" y1="0" x2="0" y2="50" stroke="#9A9A9A" stroke-width="3.0"/><line x1="0" y1="0" x2="37" y2="50" stroke="#EEEEEE" stroke-width="1.3"/><line x1="37" y1="0" x2="0" y2="50" stroke="#EEEEEE" stroke-width="1.3"/><rect x="0.5" y="0.5" width="36" height="49" fill="none" stroke="#8F8F8F" stroke-width="1"/></svg></div>
<div class="snk" style="left:977px;top:38px;width:24px;height:28px"><div class="snk2" style="width:22px;height:26px"><div style="position:absolute;left:0;top:0;width:22px;height:26px;background:#fff"><div style="position:absolute;left:0;top:12px;width:22px;height:1px;background:#000"></div><svg style="position:absolute;left:3px;top:13px" width="11" height="12" shape-rendering="crispEdges"><path fill="#000" d="M0 0h11v1h-11zM1 1h4v1h-4zM6 1h4v1h-4zM1 2h2v1h-2zM8 2h2v1h-2zM0 3h2v1h-2zM9 3h2v1h-2zM0 4h2v1h-2zM9 4h2v1h-2zM0 5h2v1h-2zM9 5h2v1h-2zM0 6h2v1h-2zM9 6h2v1h-2zM1 7h2v1h-2zM8 7h2v1h-2zM1 8h2v1h-2zM8 8h2v1h-2zM2 9h2v1h-2zM7 9h2v1h-2zM3 10h5v1h-5zM4 11h3v1h-3z"/></svg></div></div></div>
<div class="t" style="left:812px;top:111px;color:#000;">Type of diamond</div>
<div class="cb" style="left:814px;top:132px;width:185px;height:22px"><span class="cbt" style="width:151px">Diamond Type 1</span><div class="cbb"><svg style="position:absolute;left:7px;top:7px" width="9" height="6" shape-rendering="crispEdges"><path fill="#4D6185" d="M0 0h2v1h-2zM7 0h2v1h-2zM0 1h3v1h-3zM6 1h3v1h-3zM1 2h3v1h-3zM5 2h3v1h-3zM2 3h5v1h-5zM3 4h3v1h-3zM4 5h1v1h-1z"/></svg></div></div>
<div class="rad" style="left:807px;top:202px"></div>
<div class="t" style="left:826px;top:203px;color:#000;">1:1</div>
<div class="rad" style="left:807px;top:227px"><div class="dot"></div></div>
<div class="t" style="left:826px;top:228px;color:#000;">1:2</div>
<div class="rad" style="left:807px;top:252px"></div>
<svg style="position:absolute;left:834px;top:262px" width="14" height="7" shape-rendering="crispEdges"><path fill="#000" d="M3 0h1v1h-1zM10 0h1v1h-1zM2 1h2v1h-2zM10 1h2v1h-2zM1 2h3v1h-3zM10 2h3v1h-3zM0 3h14v1h-14zM1 4h3v1h-3zM10 4h3v1h-3zM2 5h2v1h-2zM10 5h2v1h-2zM3 6h1v1h-1zM10 6h1v1h-1z"/></svg>
<div class="tb ro" style="left:854px;top:252px;width:42px;height:26px;"><span style="color:#ACA899">1</span></div>
<div class="sp dis" style="left:900px;top:252px;width:24px;height:28px"><div class="spi" style="width:22px;height:26px"><svg style="position:absolute;left:7px;top:5px" width="7" height="4" shape-rendering="crispEdges"><path fill="#C9C7BA" d="M3 0h1v1h-1zM2 1h3v1h-3zM1 2h5v1h-5zM0 3h3v1h-3zM4 3h3v1h-3z"/></svg><svg style="position:absolute;left:7px;top:18px" width="7" height="4" shape-rendering="crispEdges"><path fill="#C9C7BA" d="M0 0h3v1h-3zM4 0h3v1h-3zM1 1h5v1h-5zM2 2h3v1h-3zM3 3h1v1h-1z"/></svg></div></div>
<svg style="position:absolute;left:936px;top:260px" width="7" height="14" shape-rendering="crispEdges"><path fill="#000" d="M3 0h1v1h-1zM2 1h3v1h-3zM1 2h5v1h-5zM0 3h7v1h-7zM3 4h1v1h-1zM3 5h1v1h-1zM3 6h1v1h-1zM3 7h1v1h-1zM3 8h1v1h-1zM3 9h1v1h-1zM0 10h7v1h-7zM1 11h5v1h-5zM2 12h3v1h-3zM3 13h1v1h-1z"/></svg>
<div class="tb ro" style="left:954px;top:252px;width:42px;height:26px;"><span style="color:#ACA899">2</span></div>
<div class="sp dis" style="left:1000px;top:252px;width:24px;height:28px"><div class="spi" style="width:22px;height:26px"><svg style="position:absolute;left:7px;top:5px" width="7" height="4" shape-rendering="crispEdges"><path fill="#C9C7BA" d="M3 0h1v1h-1zM2 1h3v1h-3zM1 2h5v1h-5zM0 3h3v1h-3zM4 3h3v1h-3z"/></svg><svg style="position:absolute;left:7px;top:18px" width="7" height="4" shape-rendering="crispEdges"><path fill="#C9C7BA" d="M0 0h3v1h-3zM4 0h3v1h-3zM1 1h5v1h-5zM2 2h3v1h-3zM3 3h1v1h-1z"/></svg></div></div>
<div class="chk" style="position:absolute;left:807px;top:312px;width:14px;height:14px;border:1px solid #1C5180;background:linear-gradient(135deg,#DCDAD0 0%,#F4F3EE 50%,#FFFFFF 100%)"></div>
<svg style="position:absolute;left:810px;top:315px" width="10" height="10" shape-rendering="crispEdges"><path fill="#21A121" d="M9 0h1v1h-1zM8 1h2v1h-2zM7 2h3v1h-3zM6 3h3v1h-3zM0 4h1v1h-1zM5 4h3v1h-3zM0 5h2v1h-2zM4 5h3v1h-3zM0 6h3v1h-3zM4 6h2v1h-2zM1 7h5v1h-5zM2 8h3v1h-3zM3 9h1v1h-1z"/></svg>
<div class="t" style="left:825px;top:313px;color:#000;">Insert embroidery stitch</div>
<div class="t" style="left:813px;top:339px;color:#000;">Shift the embroidery stitch by:</div>
<svg style="position:absolute;left:820px;top:370px" width="14" height="7" shape-rendering="crispEdges"><path fill="#000" d="M3 0h1v1h-1zM10 0h1v1h-1zM2 1h2v1h-2zM10 1h2v1h-2zM1 2h3v1h-3zM10 2h3v1h-3zM0 3h14v1h-14zM1 4h3v1h-3zM10 4h3v1h-3zM2 5h2v1h-2zM10 5h2v1h-2zM3 6h1v1h-1zM10 6h1v1h-1z"/></svg>
<div class="tb" style="left:842px;top:360px;width:52px;height:26px;"><span style="color:#000">0</span></div>
<div class="sp" style="left:896px;top:360px;width:24px;height:28px"><div class="spi" style="width:22px;height:26px"><svg style="position:absolute;left:7px;top:5px" width="7" height="4" shape-rendering="crispEdges"><path fill="#4D6185" d="M3 0h1v1h-1zM2 1h3v1h-3zM1 2h5v1h-5zM0 3h3v1h-3zM4 3h3v1h-3z"/></svg><svg style="position:absolute;left:7px;top:18px" width="7" height="4" shape-rendering="crispEdges"><path fill="#4D6185" d="M0 0h3v1h-3zM4 0h3v1h-3zM1 1h5v1h-5zM2 2h3v1h-3zM3 3h1v1h-1z"/></svg></div></div>
<svg style="position:absolute;left:934px;top:368px" width="7" height="14" shape-rendering="crispEdges"><path fill="#000" d="M3 0h1v1h-1zM2 1h3v1h-3zM1 2h5v1h-5zM0 3h7v1h-7zM3 4h1v1h-1zM3 5h1v1h-1zM3 6h1v1h-1zM3 7h1v1h-1zM3 8h1v1h-1zM3 9h1v1h-1zM0 10h7v1h-7zM1 11h5v1h-5zM2 12h3v1h-3zM3 13h1v1h-1z"/></svg>
<div class="tb" style="left:954px;top:360px;width:52px;height:26px;"><span style="color:#000">0</span></div>
<div class="sp" style="left:1008px;top:362px;width:24px;height:28px"><div class="spi" style="width:22px;height:26px"><svg style="position:absolute;left:7px;top:5px" width="7" height="4" shape-rendering="crispEdges"><path fill="#4D6185" d="M3 0h1v1h-1zM2 1h3v1h-3zM1 2h5v1h-5zM0 3h3v1h-3zM4 3h3v1h-3z"/></svg><svg style="position:absolute;left:7px;top:18px" width="7" height="4" shape-rendering="crispEdges"><path fill="#4D6185" d="M0 0h3v1h-3zM4 0h3v1h-3zM1 1h5v1h-5zM2 2h3v1h-3zM3 3h1v1h-1z"/></svg></div></div>
<div class="t" style="left:805px;top:423px;color:#000;">All</div>
<div class="snk" style="left:845px;top:414px;width:24px;height:28px"><div class="snk2" style="width:22px;height:26px"><div style="position:absolute;left:0;top:0;width:22px;height:26px;background:#ECE9D8"><div style="position:absolute;left:0;top:0;width:21px;height:25px;background:#FFFBE0"></div><div style="position:absolute;left:2px;top:2px;width:18px;height:22px;background:#0000FF"></div></div></div></div>
<div class="cb" style="left:873px;top:418px;width:215px;height:22px"><span class="cbt" style="width:181px">Stitch_Tuck</span><div class="cbb"><svg style="position:absolute;left:7px;top:7px" width="9" height="6" shape-rendering="crispEdges"><path fill="#4D6185" d="M0 0h2v1h-2zM7 0h2v1h-2zM0 1h3v1h-3zM6 1h3v1h-3zM1 2h3v1h-3zM5 2h3v1h-3zM2 3h5v1h-5zM3 4h3v1h-3zM4 5h1v1h-1z"/></svg></div></div>
<svg style="position:absolute;left:798px;top:467px" width="37" height="50"><rect x="0" y="0" width="18.5" height="50" fill="#F2F2F2"/><rect x="18.5" y="0" width="18.5" height="50" fill="#D2D2D2"/><polygon points="18.5,0.5 36.5,25 18.5,49.5 0.5,25" fill="#E0E0E0" stroke="#A8A8A8" stroke-width="1"/><line x1="0" y1="0" x2="37" y2="50" stroke="#A0A0A0" stroke-width="3.0"/><line x1="37" y1="0" x2="0" y2="50" stroke="#A0A0A0" stroke-width="3.0"/><line x1="0" y1="0" x2="37" y2="50" stroke="#EEEEEE" stroke-width="1.3"/><line x1="37" y1="0" x2="0" y2="50" stroke="#EEEEEE" stroke-width="1.3"/><line x1="1.5" y1="1.5" x2="18" y2="24.5" stroke="#3A0000" stroke-width="3"/><line x1="1.5" y1="1.5" x2="18" y2="24.5" stroke="#FF0000" stroke-width="1.6"/><rect x="0.5" y="0.5" width="36" height="49" fill="none" stroke="#9C9C9C" stroke-width="1"/></svg>
<div class="snk" style="left:845px;top:462px;width:24px;height:28px"><div class="snk2" style="width:22px;height:26px"><div style="position:absolute;left:0;top:0;width:22px;height:26px;background:#ECE9D8"><div style="position:absolute;left:0;top:0;width:21px;height:25px;background:#FFFBE0"></div><div style="position:absolute;left:2px;top:2px;width:18px;height:22px;background:#0000FF"></div></div></div></div>
<div class="snk" style="left:845px;top:494px;width:24px;height:28px"><div class="snk2" style="width:22px;height:26px"><div style="position:absolute;left:0;top:0;width:22px;height:26px;background:#ECE9D8"><div style="position:absolute;left:0;top:0;width:21px;height:25px;background:#FFFBE0"></div><div style="position:absolute;left:2px;top:2px;width:18px;height:22px;background:#0000FF"></div></div></div></div>
<div class="cb" style="left:873px;top:466px;width:215px;height:22px"><span class="cbt" style="width:181px">Stitch_Tuck</span><div class="cbb"><svg style="position:absolute;left:7px;top:7px" width="9" height="6" shape-rendering="crispEdges"><path fill="#4D6185" d="M0 0h2v1h-2zM7 0h2v1h-2zM0 1h3v1h-3zM6 1h3v1h-3zM1 2h3v1h-3zM5 2h3v1h-3zM2 3h5v1h-5zM3 4h3v1h-3zM4 5h1v1h-1z"/></svg></div></div>
<div class="cb" style="left:873px;top:496px;width:215px;height:22px"><span class="cbt" style="width:181px">Stitch_Tuck</span><div class="cbb"><svg style="position:absolute;left:7px;top:7px" width="9" height="6" shape-rendering="crispEdges"><path fill="#4D6185" d="M0 0h2v1h-2zM7 0h2v1h-2zM0 1h3v1h-3zM6 1h3v1h-3zM1 2h3v1h-3zM5 2h3v1h-3zM2 3h5v1h-5zM3 4h3v1h-3zM4 5h1v1h-1z"/></svg></div></div>
<svg style="position:absolute;left:798px;top:537px" width="37" height="50"><rect x="0" y="0" width="18.5" height="50" fill="#F2F2F2"/><rect x="18.5" y="0" width="18.5" height="50" fill="#D2D2D2"/><polygon points="18.5,0.5 36.5,25 18.5,49.5 0.5,25" fill="#E0E0E0" stroke="#A8A8A8" stroke-width="1"/><line x1="0" y1="0" x2="37" y2="50" stroke="#A0A0A0" stroke-width="3.0"/><line x1="37" y1="0" x2="0" y2="50" stroke="#A0A0A0" stroke-width="3.0"/><line x1="0" y1="0" x2="37" y2="50" stroke="#EEEEEE" stroke-width="1.3"/><line x1="37" y1="0" x2="0" y2="50" stroke="#EEEEEE" stroke-width="1.3"/><line x1="1.5" y1="48.5" x2="18" y2="25.5" stroke="#3A0000" stroke-width="3"/><line x1="1.5" y1="48.5" x2="18" y2="25.5" stroke="#FF0000" stroke-width="1.6"/><rect x="0.5" y="0.5" width="36" height="49" fill="none" stroke="#9C9C9C" stroke-width="1"/></svg>
<div class="snk" style="left:845px;top:532px;width:24px;height:28px"><div class="snk2" style="width:22px;height:26px"><div style="position:absolute;left:0;top:0;width:22px;height:26px;background:#ECE9D8"><div style="position:absolute;left:0;top:0;width:21px;height:25px;background:#FFFBE0"></div><div style="position:absolute;left:2px;top:2px;width:18px;height:22px;background:#0000FF"></div></div></div></div>
<div class="snk" style="left:845px;top:564px;width:24px;height:28px"><div class="snk2" style="width:22px;height:26px"><div style="position:absolute;left:0;top:0;width:22px;height:26px;background:#ECE9D8"><div style="position:absolute;left:0;top:0;width:21px;height:25px;background:#FFFBE0"></div><div style="position:absolute;left:2px;top:2px;width:18px;height:22px;background:#0000FF"></div></div></div></div>
<div class="cb" style="left:873px;top:536px;width:215px;height:22px"><span class="cbt" style="width:181px">Stitch_Tuck</span><div class="cbb"><svg style="position:absolute;left:7px;top:7px" width="9" height="6" shape-rendering="crispEdges"><path fill="#4D6185" d="M0 0h2v1h-2zM7 0h2v1h-2zM0 1h3v1h-3zM6 1h3v1h-3zM1 2h3v1h-3zM5 2h3v1h-3zM2 3h5v1h-5zM3 4h3v1h-3zM4 5h1v1h-1z"/></svg></div></div>
<div class="cb" style="left:873px;top:566px;width:215px;height:22px"><span class="cbt" style="width:181px">Stitch_Tuck</span><div class="cbb"><svg style="position:absolute;left:7px;top:7px" width="9" height="6" shape-rendering="crispEdges"><path fill="#4D6185" d="M0 0h2v1h-2zM7 0h2v1h-2zM0 1h3v1h-3zM6 1h3v1h-3zM1 2h3v1h-3zM5 2h3v1h-3zM2 3h5v1h-5zM3 4h3v1h-3zM4 5h1v1h-1z"/></svg></div></div>
<svg style="position:absolute;left:798px;top:607px" width="37" height="50"><rect x="0" y="0" width="18.5" height="50" fill="#F2F2F2"/><rect x="18.5" y="0" width="18.5" height="50" fill="#D2D2D2"/><polygon points="18.5,0.5 36.5,25 18.5,49.5 0.5,25" fill="#E0E0E0" stroke="#A8A8A8" stroke-width="1"/><line x1="0" y1="0" x2="37" y2="50" stroke="#A0A0A0" stroke-width="3.0"/><line x1="37" y1="0" x2="0" y2="50" stroke="#A0A0A0" stroke-width="3.0"/><line x1="0" y1="0" x2="37" y2="50" stroke="#EEEEEE" stroke-width="1.3"/><line x1="37" y1="0" x2="0" y2="50" stroke="#EEEEEE" stroke-width="1.3"/><rect x="16" y="23" width="5" height="4" fill="#FF0000"/><rect x="0.5" y="0.5" width="36" height="49" fill="none" stroke="#9C9C9C" stroke-width="1"/></svg>
<div class="snk" style="left:845px;top:602px;width:24px;height:28px"><div class="snk2" style="width:22px;height:26px"><div style="position:absolute;left:0;top:0;width:22px;height:26px;background:#ECE9D8"><div style="position:absolute;left:0;top:0;width:21px;height:25px;background:#FFFBE0"></div><div style="position:absolute;left:2px;top:2px;width:18px;height:22px;background:#00FF40"></div></div></div></div>
<div class="snk" style="left:845px;top:634px;width:24px;height:28px"><div class="snk2" style="width:22px;height:26px"><div style="position:absolute;left:0;top:0;width:22px;height:26px;background:#ECE9D8"><div style="position:absolute;left:0;top:0;width:21px;height:25px;background:#FFFBE0"></div><div style="position:absolute;left:2px;top:2px;width:18px;height:22px;background:#00FF40"></div></div></div></div>
<div class="cb" style="left:873px;top:606px;width:215px;height:22px"><span class="cbt" style="width:181px">Stitch_Tuck</span><div class="cbb"><svg style="position:absolute;left:7px;top:7px" width="9" height="6" shape-rendering="crispEdges"><path fill="#4D6185" d="M0 0h2v1h-2zM7 0h2v1h-2zM0 1h3v1h-3zM6 1h3v1h-3zM1 2h3v1h-3zM5 2h3v1h-3zM2 3h5v1h-5zM3 4h3v1h-3zM4 5h1v1h-1z"/></svg></div></div>
<div class="cb" style="left:873px;top:636px;width:215px;height:22px"><span class="cbt" style="width:181px">Stitch_Tuck</span><div class="cbb"><svg style="position:absolute;left:7px;top:7px" width="9" height="6" shape-rendering="crispEdges"><path fill="#4D6185" d="M0 0h2v1h-2zM7 0h2v1h-2zM0 1h3v1h-3zM6 1h3v1h-3zM1 2h3v1h-3zM5 2h3v1h-3zM2 3h5v1h-5zM3 4h3v1h-3zM4 5h1v1h-1z"/></svg></div></div>
<svg style="position:absolute;left:798px;top:677px" width="37" height="50"><rect x="0" y="0" width="18.5" height="50" fill="#F2F2F2"/><rect x="18.5" y="0" width="18.5" height="50" fill="#D2D2D2"/><polygon points="18.5,0.5 36.5,25 18.5,49.5 0.5,25" fill="#E0E0E0" stroke="#A8A8A8" stroke-width="1"/><line x1="0" y1="0" x2="37" y2="50" stroke="#A0A0A0" stroke-width="3.0"/><line x1="37" y1="0" x2="0" y2="50" stroke="#A0A0A0" stroke-width="3.0"/><line x1="0" y1="0" x2="37" y2="50" stroke="#EEEEEE" stroke-width="1.3"/><line x1="37" y1="0" x2="0" y2="50" stroke="#EEEEEE" stroke-width="1.3"/><line x1="35.5" y1="1.5" x2="19" y2="24.5" stroke="#3A0000" stroke-width="3"/><line x1="35.5" y1="1.5" x2="19" y2="24.5" stroke="#FF0000" stroke-width="1.6"/><rect x="0.5" y="0.5" width="36" height="49" fill="none" stroke="#9C9C9C" stroke-width="1"/></svg>
<div class="snk" style="left:845px;top:672px;width:24px;height:28px"><div class="snk2" style="width:22px;height:26px"><div style="position:absolute;left:0;top:0;width:22px;height:26px;background:#ECE9D8"><div style="position:absolute;left:0;top:0;width:21px;height:25px;background:#FFFBE0"></div><div style="position:absolute;left:2px;top:2px;width:18px;height:22px;background:#00FF40"></div></div></div></div>
<div class="snk" style="left:845px;top:704px;width:24px;height:28px"><div class="snk2" style="width:22px;height:26px"><div style="position:absolute;left:0;top:0;width:22px;height:26px;background:#ECE9D8"><div style="position:absolute;left:0;top:0;width:21px;height:25px;background:#FFFBE0"></div><div style="position:absolute;left:2px;top:2px;width:18px;height:22px;background:#00FF40"></div></div></div></div>
<div class="cb" style="left:873px;top:676px;width:215px;height:22px"><span class="cbt" style="width:181px">Stitch_Tuck</span><div class="cbb"><svg style="position:absolute;left:7px;top:7px" width="9" height="6" shape-rendering="crispEdges"><path fill="#4D6185" d="M0 0h2v1h-2zM7 0h2v1h-2zM0 1h3v1h-3zM6 1h3v1h-3zM1 2h3v1h-3zM5 2h3v1h-3zM2 3h5v1h-5zM3 4h3v1h-3zM4 5h1v1h-1z"/></svg></div></div>
<div class="cb" style="left:873px;top:706px;width:215px;height:22px"><span class="cbt" style="width:181px">Stitch_Tuck</span><div class="cbb"><svg style="position:absolute;left:7px;top:7px" width="9" height="6" shape-rendering="crispEdges"><path fill="#4D6185" d="M0 0h2v1h-2zM7 0h2v1h-2zM0 1h3v1h-3zM6 1h3v1h-3zM1 2h3v1h-3zM5 2h3v1h-3zM2 3h5v1h-5zM3 4h3v1h-3zM4 5h1v1h-1z"/></svg></div></div>
<svg style="position:absolute;left:798px;top:747px" width="37" height="50"><rect x="0" y="0" width="18.5" height="50" fill="#F2F2F2"/><rect x="18.5" y="0" width="18.5" height="50" fill="#D2D2D2"/><polygon points="18.5,0.5 36.5,25 18.5,49.5 0.5,25" fill="#E0E0E0" stroke="#A8A8A8" stroke-width="1"/><line x1="0" y1="0" x2="37" y2="50" stroke="#A0A0A0" stroke-width="3.0"/><line x1="37" y1="0" x2="0" y2="50" stroke="#A0A0A0" stroke-width="3.0"/><line x1="0" y1="0" x2="37" y2="50" stroke="#EEEEEE" stroke-width="1.3"/><line x1="37" y1="0" x2="0" y2="50" stroke="#EEEEEE" stroke-width="1.3"/><line x1="35.5" y1="48.5" x2="19" y2="25.5" stroke="#3A0000" stroke-width="3"/><line x1="35.5" y1="48.5" x2="19" y2="25.5" stroke="#FF0000" stroke-width="1.6"/><rect x="0.5" y="0.5" width="36" height="49" fill="none" stroke="#9C9C9C" stroke-width="1"/></svg>
<div class="snk" style="left:845px;top:742px;width:24px;height:28px"><div class="snk2" style="width:22px;height:26px"><div style="position:absolute;left:0;top:0;width:22px;height:26px;background:#ECE9D8"><div style="position:absolute;left:0;top:0;width:21px;height:25px;background:#FFFBE0"></div><div style="position:absolute;left:2px;top:2px;width:18px;height:22px;background:#00FF40"></div></div></div></div>
<div class="snk" style="left:845px;top:774px;width:24px;height:28px"><div class="snk2" style="width:22px;height:26px"><div style="position:absolute;left:0;top:0;width:22px;height:26px;background:#ECE9D8"><div style="position:absolute;left:0;top:0;width:21px;height:25px;background:#FFFBE0"></div><div style="position:absolute;left:2px;top:2px;width:18px;height:22px;background:#00FF40"></div></div></div></div>
<div class="cb" style="left:873px;top:746px;width:215px;height:22px"><span class="cbt" style="width:181px">Stitch_Tuck</span><div class="cbb"><svg style="position:absolute;left:7px;top:7px" width="9" height="6" shape-rendering="crispEdges"><path fill="#4D6185" d="M0 0h2v1h-2zM7 0h2v1h-2zM0 1h3v1h-3zM6 1h3v1h-3zM1 2h3v1h-3zM5 2h3v1h-3zM2 3h5v1h-5zM3 4h3v1h-3zM4 5h1v1h-1z"/></svg></div></div>
<div class="cb" style="left:873px;top:776px;width:215px;height:22px"><span class="cbt" style="width:181px">Stitch_Tuck</span><div class="cbb"><svg style="position:absolute;left:7px;top:7px" width="9" height="6" shape-rendering="crispEdges"><path fill="#4D6185" d="M0 0h2v1h-2zM7 0h2v1h-2zM0 1h3v1h-3zM6 1h3v1h-3zM1 2h3v1h-3zM5 2h3v1h-3zM2 3h5v1h-5zM3 4h3v1h-3zM4 5h1v1h-1z"/></svg></div></div>
<div class="t" style="left:790px;top:817px;color:#000;">Interrupted embroidery stitch by</div>
<div class="cb" style="left:873px;top:834px;width:215px;height:22px"><span class="cbt" style="width:181px">Interruption of embroidery stitch</span><div class="cbb"><svg style="position:absolute;left:7px;top:7px" width="9" height="6" shape-rendering="crispEdges"><path fill="#4D6185" d="M0 0h2v1h-2zM7 0h2v1h-2zM0 1h3v1h-3zM6 1h3v1h-3zM1 2h3v1h-3zM5 2h3v1h-3zM2 3h5v1h-5zM3 4h3v1h-3zM4 5h1v1h-1z"/></svg></div></div>
<div style="position:absolute;left:697px;top:137px;width:12px;height:20px"><svg style="position:absolute;left:0px;top:0px" width="12" height="20" shape-rendering="crispEdges"><path fill="#000" d="M0 0h1v1h-1zM0 1h2v1h-2zM0 2h1v1h-1zM2 2h1v1h-1zM0 3h1v1h-1zM3 3h1v1h-1zM0 4h1v1h-1zM4 4h1v1h-1zM0 5h1v1h-1zM5 5h1v1h-1zM0 6h1v1h-1zM6 6h1v1h-1zM0 7h1v1h-1zM7 7h1v1h-1zM0 8h1v1h-1zM8 8h1v1h-1zM0 9h1v1h-1zM9 9h1v1h-1zM0 10h1v1h-1zM10 10h1v1h-1zM0 11h1v1h-1zM7 11h5v1h-5zM0 12h1v1h-1zM4 12h1v1h-1zM7 12h1v1h-1zM0 13h1v1h-1zM3 13h1v1h-1zM5 13h1v1h-1zM8 13h1v1h-1zM0 14h1v1h-1zM2 14h1v1h-1zM5 14h1v1h-1zM8 14h1v1h-1zM0 15h2v1h-2zM6 15h1v1h-1zM9 15h1v1h-1zM0 16h1v1h-1zM6 16h1v1h-1zM9 16h1v1h-1zM7 17h1v1h-1zM10 17h1v1h-1zM7 18h1v1h-1zM10 18h1v1h-1zM8 19h2v1h-2z"/></svg><svg style="position:absolute;left:0px;top:0px" width="12" height="20" shape-rendering="crispEdges"><path fill="#FFF" d="M1 2h1v1h-1zM1 3h2v1h-2zM1 4h3v1h-3zM1 5h4v1h-4zM1 6h5v1h-5zM1 7h6v1h-6zM1 8h7v1h-7zM1 9h8v1h-8zM1 10h9v1h-9zM1 11h6v1h-6zM1 12h3v1h-3zM5 12h2v1h-2zM1 13h2v1h-2zM6 13h2v1h-2zM1 14h1v1h-1zM6 14h2v1h-2zM7 15h2v1h-2zM7 16h2v1h-2zM8 17h2v1h-2zM8 18h2v1h-2z"/></svg></div>
</body></html>
